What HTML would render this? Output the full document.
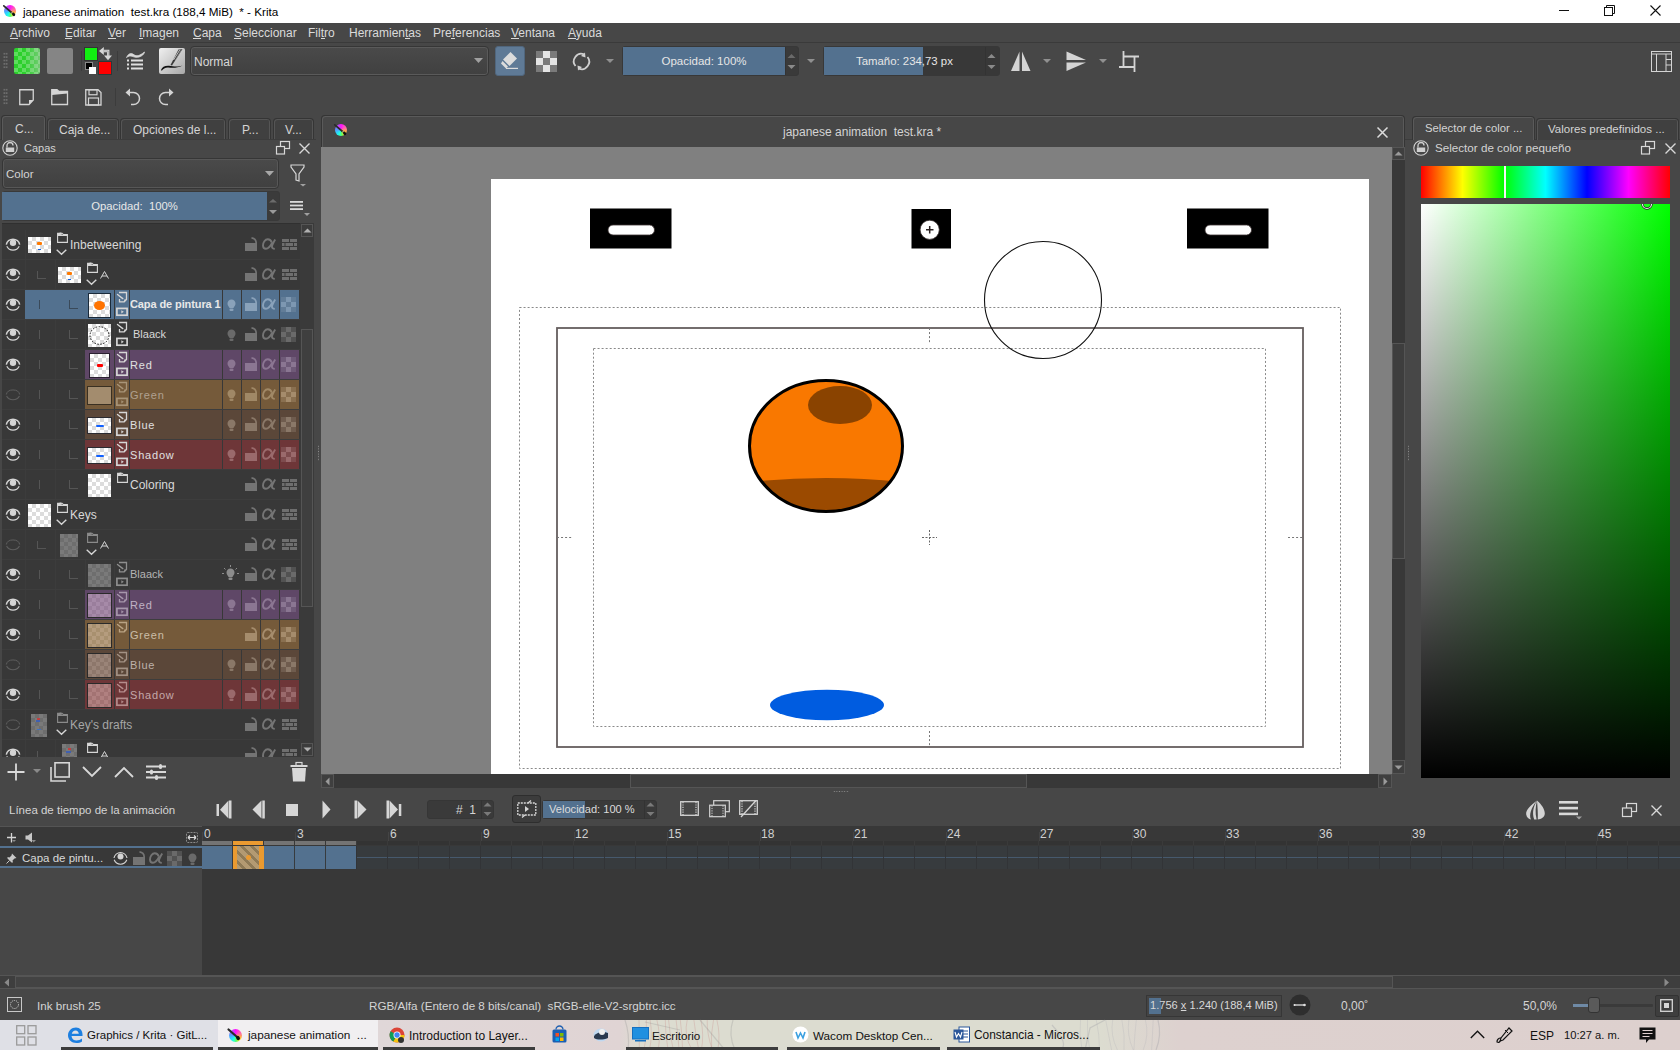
<!DOCTYPE html>
<html><head><meta charset="utf-8">
<style>
*{margin:0;padding:0;box-sizing:border-box}
html,body{width:1680px;height:1050px;overflow:hidden;background:#474747;font-family:"Liberation Sans",sans-serif;font-size:12px;color:#d4d4d4}
.a{position:absolute}
.t{position:absolute;white-space:nowrap;line-height:1}
svg{position:absolute;overflow:visible}
</style></head><body>
<!-- TITLE BAR -->
<div class="a" style="left:0;top:0;width:1680px;height:23px;background:#fff"></div>
<div class="t" style="left:23px;top:6px;color:#000;font-size:11.7px">japanese animation&nbsp; test.kra (188,4 MiB)&nbsp; * - Krita</div>

<!-- MENU -->
<div class="a" style="left:0;top:23px;width:1680px;height:20px;background:#474747;border-bottom:1px solid #3a3a3a"></div>


<!-- MENU ITEMS -->
<div class="t" style="left:10px;top:27px;color:#dadada">Archivo</div>
<div class="t" style="left:65px;top:27px;color:#dadada">Editar</div>
<div class="t" style="left:108px;top:27px;color:#dadada">Ver</div>
<div class="t" style="left:139px;top:27px;color:#dadada">Imagen</div>
<div class="t" style="left:193px;top:27px;color:#dadada">Capa</div>
<div class="t" style="left:234px;top:27px;color:#dadada">Seleccionar</div>
<div class="t" style="left:308px;top:27px;color:#dadada">Filtro</div>
<div class="t" style="left:349px;top:27px;color:#dadada">Herramientas</div>
<div class="t" style="left:433px;top:27px;color:#dadada">Preferencias</div>
<div class="t" style="left:511px;top:27px;color:#dadada">Ventana</div>
<div class="t" style="left:568px;top:27px;color:#dadada">Ayuda</div>
<!-- menu underlines -->
<div class="a" style="left:10px;top:38px;width:8px;height:1px;background:#dadada"></div>
<div class="a" style="left:65px;top:38px;width:7px;height:1px;background:#dadada"></div>
<div class="a" style="left:108px;top:38px;width:8px;height:1px;background:#dadada"></div>
<div class="a" style="left:139px;top:38px;width:4px;height:1px;background:#dadada"></div>
<div class="a" style="left:193px;top:38px;width:8px;height:1px;background:#dadada"></div>
<div class="a" style="left:234px;top:38px;width:7px;height:1px;background:#dadada"></div>
<div class="a" style="left:321px;top:38px;width:4px;height:1px;background:#dadada"></div>
<div class="a" style="left:405px;top:38px;width:5px;height:1px;background:#dadada"></div>
<div class="a" style="left:451px;top:38px;width:4px;height:1px;background:#dadada"></div>
<div class="a" style="left:511px;top:38px;width:8px;height:1px;background:#dadada"></div>
<div class="a" style="left:568px;top:38px;width:8px;height:1px;background:#dadada"></div>

<!-- TOOLBAR 1 -->
<div class="a" style="left:3px;top:52px;width:5px;height:17px;background-image:radial-gradient(circle,#777 0.8px,transparent 1px);background-size:2.5px 3.4px"></div>
<div class="a" style="left:14px;top:48px;width:26px;height:26px;border-radius:2px;background-color:#22ee22;background-image:linear-gradient(90deg,rgba(71,71,71,0) 0%,rgba(71,71,71,0.0) 40%,rgba(200,200,200,0.45) 100%),repeating-conic-gradient(#5fdc5f 0 25%,#2bd02b 0 50%);background-size:100% 100%,8px 8px"></div>
<div class="a" style="left:47px;top:48px;width:26px;height:26px;border-radius:2px;background:#858585"></div>
<div class="a" style="left:81px;top:51px;width:1px;height:20px;background:#3c3c3c"></div>
<div class="a" style="left:84px;top:47px;width:14px;height:14px;background:#11f011;border:1px solid #333"></div>
<svg style="left:99px;top:47px" width="13" height="14" viewBox="0 0 13 14"><path d="M0 4 L4.8 0 L4.8 8 Z" fill="#d6d6d6"/><path d="M4.5 4 L9.2 4 L9.2 9" fill="none" stroke="#d6d6d6" stroke-width="2.4"/><path d="M4.6 4 L9.2 4 L9.2 9" fill="none" stroke="#9a9a9a" stroke-width="0.7"/><path d="M5 8.6 L13 8.6 L9 13.2 Z" fill="#d6d6d6"/></svg>
<div class="a" style="left:85px;top:62px;width:8px;height:8px;background:#000;border:1px solid #888"></div>
<div class="a" style="left:89px;top:67px;width:7px;height:7px;background:#fff"></div>
<div class="a" style="left:98px;top:61px;width:14px;height:14px;background:#ff0000;border:1px solid #2b3a3a"></div>
<div class="a" style="left:117px;top:51px;width:1px;height:20px;background:#3c3c3c"></div>
<svg style="left:126px;top:51px" width="20" height="20" viewBox="0 0 20 20"><path d="M0.5 6.5 C2.5 2.5,5 1.5,8 3.8 C10.5 5.5,13.5 5,18.5 1 C18 4,14 6.5,10 6.3 C6.5 6,4.5 3.5,0.5 6.5 Z" fill="#d8d8d8" stroke="#d8d8d8" stroke-width="0.8"/><rect x="1" y="8.5" width="2" height="2" fill="#e0e0e0"/><rect x="5" y="8.5" width="12" height="2" fill="#e0e0e0"/><rect x="1" y="12.5" width="2" height="2" fill="#e0e0e0"/><rect x="5" y="12.5" width="12" height="2" fill="#e0e0e0"/><rect x="1" y="16.5" width="2" height="2" fill="#e0e0e0"/><rect x="5" y="16.5" width="12" height="2" fill="#e0e0e0"/></svg>
<div class="a" style="left:159px;top:48px;width:26px;height:26px;border-radius:2px;background:linear-gradient(135deg,#f0f0f0,#a8a8a8)"></div>
<svg style="left:159px;top:48px" width="26" height="26" viewBox="0 0 26 26"><path d="M2 22 C3 19,6 17.5,10 17.8 C14 18,18 19.5,23.5 17.5 C18 20.5,13 19.8,9 19.6 C6 19.6,4 21,2.8 22.8 Z" fill="#111"/><path d="M11.5 17 L19.5 1.5 L23.5 1 L13 17.5 Z" fill="#3a3a3a"/><path d="M14.5 12 L21 1.5" stroke="#e0e0e0" stroke-width="0.8"/><path d="M16.5 12 L22.5 1.5" stroke="#999" stroke-width="0.6"/></svg>
<!-- blend combo -->
<div class="a" style="left:190px;top:46px;width:299px;height:30px;border:1px solid #363636;border-radius:4px;box-shadow:inset 0 0 0 1px #5a5a5a;background:linear-gradient(#4a4a4a,#404040)"></div>
<div class="t" style="left:194px;top:56px;color:#d8d8d8">Normal</div>
<svg style="left:474px;top:58px" width="9" height="5"><path d="M0 0 L9 0 L4.5 5Z" fill="#a0a0a0"/></svg>
<!-- eraser -->
<div class="a" style="left:495px;top:46px;width:30px;height:30px;border-radius:3px;background:#5f7a96;border:1px solid #50667d"></div>
<svg style="left:500px;top:51px" width="20" height="20" viewBox="0 0 20 20"><path d="M10.5 1 L17 7.5 L9.5 15 L3 8.5 Z" fill="#dcdcdc"/><path d="M2 10 L7.5 15.5 L5.5 17.5 L0.5 12.5 Z" fill="#dcdcdc" transform="translate(0.5,0)"/><rect x="6" y="16.8" width="12" height="1.2" fill="#dcdcdc"/></svg>
<!-- alpha checker -->
<div class="a" style="left:536px;top:51px;width:21px;height:21px;background-image:repeating-conic-gradient(#e4e4e4 0 25%,#7a7a7a 0 50%);background-size:14px 14px"></div>
<svg style="left:572px;top:52px" width="19" height="19" viewBox="0 0 19 19"><path d="M3.5 14 A7.5 7.5 0 0 1 12 2.3" fill="none" stroke="#d0d0d0" stroke-width="1.8"/><path d="M15.5 5 A7.5 7.5 0 0 1 7 16.7" fill="none" stroke="#d0d0d0" stroke-width="1.8"/><path d="M13 0.5 L13.5 5.5 L9 4 Z" fill="#d0d0d0"/><path d="M6 18.5 L5.5 13.5 L10 15 Z" fill="#d0d0d0"/></svg>
<svg style="left:606px;top:59px" width="8" height="4"><path d="M0 0 L8 0 L4 4Z" fill="#909090"/></svg>
<!-- opacity slider -->
<div class="a" style="left:622px;top:46px;width:177px;height:30px;border:1px solid #383838;border-radius:3px;background:#3a3a3a"></div>
<div class="a" style="left:623px;top:47px;width:162px;height:28px;background:#53718f"></div>
<div class="t" style="left:623px;top:56px;width:162px;text-align:center;color:#e6e6e6;font-size:11.5px">Opacidad: 100%</div>
<div class="a" style="left:785px;top:47px;width:1px;height:28px;background:#333"></div>
<svg style="left:787px;top:53px" width="9" height="18"><path d="M0.5 5 L4.5 1 L8.5 5Z" fill="#6a6a6a"/><path d="M0.5 12 L4.5 16 L8.5 12Z" fill="#8a8a8a"/></svg>
<svg style="left:807px;top:59px" width="8" height="4"><path d="M0 0 L8 0 L4 4Z" fill="#909090"/></svg>
<!-- size slider -->
<div class="a" style="left:823px;top:46px;width:177px;height:30px;border:1px solid #383838;border-radius:3px;background:#383838"></div>
<div class="a" style="left:824px;top:47px;width:99px;height:28px;background:#53718f"></div>
<div class="t" style="left:856px;top:56px;color:#e6e6e6;font-size:11.4px">Tamaño: 234,73 px</div>
<div class="a" style="left:985px;top:47px;width:1px;height:28px;background:#333"></div>
<svg style="left:987px;top:53px" width="9" height="18"><path d="M0.5 5 L4.5 1 L8.5 5Z" fill="#8a8a8a"/><path d="M0.5 12 L4.5 16 L8.5 12Z" fill="#8a8a8a"/></svg>
<!-- mirror -->
<svg style="left:1010px;top:51px" width="22" height="21" viewBox="0 0 22 21"><path d="M9.5 0.5 L9.5 20 L1 20 Z" fill="#d4d4d4"/><path d="M12 0.5 L12 20 L20.5 20 Z" fill="#d4d4d4"/></svg>
<svg style="left:1043px;top:59px" width="8" height="4"><path d="M0 0 L8 0 L4 4Z" fill="#909090"/></svg>
<svg style="left:1066px;top:51px" width="22" height="21" viewBox="0 0 22 21"><path d="M0.5 0.5 L20 9 L0.5 9 Z" fill="#d4d4d4"/><path d="M0.5 11.5 L20 11.5 L0.5 20 Z" fill="#d4d4d4"/></svg>
<svg style="left:1099px;top:59px" width="8" height="4"><path d="M0 0 L8 0 L4 4Z" fill="#909090"/></svg>
<svg style="left:1119px;top:51px" width="21" height="21" viewBox="0 0 21 21"><path d="M4.5 0 L4.5 16 M0 16 L15 16 M5 5.5 L20 5.5 M15.5 5 L15.5 21" fill="none" stroke="#d4d4d4" stroke-width="1.8"/></svg>
<!-- workspace -->
<svg style="left:1651px;top:51px" width="21" height="21" viewBox="0 0 21 21"><rect x="0.5" y="0.5" width="20" height="20" fill="none" stroke="#d4d4d4"/><path d="M0.5 3 L20.5 3 M5.5 3 L5.5 21 M15 3 L15 21 M15 8.5 L20.5 8.5 M15 14 L20.5 14" fill="none" stroke="#d4d4d4"/></svg>

<!-- TOOLBAR 2 -->
<div class="a" style="left:3px;top:88px;width:5px;height:17px;background-image:radial-gradient(circle,#777 0.8px,transparent 1px);background-size:2.5px 3.4px"></div>
<svg style="left:19px;top:89px" width="16" height="17" viewBox="0 0 16 17"><path d="M0.75 0.75 L14.25 0.75 L14.25 11 L10 15.5 L0.75 15.5 Z" fill="none" stroke="#d4d4d4" stroke-width="1.3"/><path d="M10 15.5 L10 11 L14.5 11 Z" fill="#d4d4d4"/></svg>
<svg style="left:51px;top:89px" width="18" height="17" viewBox="0 0 18 17"><path d="M0.75 0.75 L6 0.75 L8 2.5 L16.5 2.5 L16.5 15.5 L0.75 15.5 Z" fill="none" stroke="#d4d4d4" stroke-width="1.3"/><path d="M0.75 0.75 L6 0.75 L8 2.5 L16.5 2.5 L16.5 4.5 L0.75 6 Z" fill="#d4d4d4"/></svg>
<svg style="left:85px;top:89px" width="17" height="17" viewBox="0 0 17 17"><path d="M0.75 0.75 L13 0.75 L16 3.5 L16 16 L0.75 16 Z" fill="none" stroke="#d4d4d4" stroke-width="1.3"/><rect x="4" y="0.75" width="8" height="5" fill="none" stroke="#d4d4d4" stroke-width="1.2"/><rect x="3.5" y="9" width="10" height="7" fill="none" stroke="#d4d4d4" stroke-width="1.2"/></svg>
<div class="a" style="left:115px;top:88px;width:1px;height:18px;background:#3c3c3c"></div>
<svg style="left:125px;top:88px" width="17" height="18" viewBox="0 0 17 18"><path d="M3 4.5 L8.5 4.5 A6 6 0 0 1 8.5 16.5 L6 16.5" fill="none" stroke="#d4d4d4" stroke-width="1.5"/><path d="M0.5 4.5 L5 0.5 L5 8.5 Z" fill="#d4d4d4"/></svg>
<svg style="left:157px;top:88px" width="17" height="18" viewBox="0 0 17 18"><path d="M14 4.5 L8.5 4.5 A6 6 0 0 0 8.5 16.5 L11 16.5" fill="none" stroke="#d4d4d4" stroke-width="1.5"/><path d="M16.5 4.5 L12 0.5 L12 8.5 Z" fill="#d4d4d4"/></svg>

<!--CANVAS_START-->
<div class="a" style="left:3.5999999999999996px;top:4.6px;width:12.8px;height:12.8px;border-radius:50%;background:conic-gradient(#ff10ff 0deg,#ff70a0 70deg,#ffb040 110deg,#f8f020 140deg,#60ff60 170deg,#20ffe0 205deg,#30d0ff 240deg,#6090ff 280deg,#b050ff 320deg,#ff10ff 360deg)"></div>
<svg style="left:3px;top:5px" width="14" height="14" viewBox="0 0 14 14"><path d="M0.8 0.8 L8.5 7.5" stroke="#2a2a2a" stroke-width="1.7" stroke-linecap="round"/><path d="M8.5 7.5 L9.5 8.3" stroke="#bbb" stroke-width="1.2"/><ellipse cx="10.6" cy="9.4" rx="1.4" ry="1.9" transform="rotate(-40 10.6 9.4)" fill="#111"/></svg>
<div class="a" style="left:321px;top:115px;width:1084px;height:33px;background:#474747;border:1px solid #353535;border-bottom:none;border-radius:4px 4px 0 0;box-shadow:inset 1px 1px 0 #5a5a5a,inset -1px 0 0 #5a5a5a"></div>
<div class="a" style="left:334.6px;top:123.6px;width:12.8px;height:12.8px;border-radius:50%;background:conic-gradient(#ff10ff 0deg,#ff70a0 70deg,#ffb040 110deg,#f8f020 140deg,#60ff60 170deg,#20ffe0 205deg,#30d0ff 240deg,#6090ff 280deg,#b050ff 320deg,#ff10ff 360deg)"></div>
<svg style="left:334px;top:124px" width="14" height="14" viewBox="0 0 14 14"><path d="M0.8 0.8 L8.5 7.5" stroke="#2a2a2a" stroke-width="1.7" stroke-linecap="round"/><path d="M8.5 7.5 L9.5 8.3" stroke="#bbb" stroke-width="1.2"/><ellipse cx="10.6" cy="9.4" rx="1.4" ry="1.9" transform="rotate(-40 10.6 9.4)" fill="#111"/></svg>
<div class="t" style="left:783px;top:126px;color:#d4d4d4">japanese animation&nbsp; test.kra *</div>
<svg style="left:1377px;top:127px" width="11" height="11" viewBox="0 0 11 11"><path d="M0.5 0.5 L10.5 10.5 M10.5 0.5 L0.5 10.5" stroke="#dcdcdc" stroke-width="1.5"/></svg>
<div class="a" style="left:321px;top:147px;width:1071px;height:627px;background:#808080"></div>
<div class="a" style="left:491px;top:179px;width:878px;height:595px;background:#fff"></div>
<div class="a" style="left:1392px;top:147px;width:13px;height:627px;background:#383838"></div>
<div class="a" style="left:1392px;top:147px;width:13px;height:13px;border:1px solid #555;background:#3f3f3f"></div>
<svg style="left:1394px;top:151px" width="9" height="5" viewBox="0 0 9 5"><path d="M0.5 4.5 L4.5 0.5 L8.5 4.5Z" fill="#9a9a9a"/></svg>
<div class="a" style="left:1392px;top:343px;width:13px;height:216px;border:1px solid #555;background:#3e3e3e"></div>
<div class="a" style="left:1392px;top:760px;width:13px;height:14px;border:1px solid #555;background:#3f3f3f"></div>
<svg style="left:1394px;top:765px" width="9" height="5" viewBox="0 0 9 5"><path d="M0.5 0.5 L8.5 0.5 L4.5 4.5Z" fill="#9a9a9a"/></svg>
<div class="a" style="left:321px;top:774px;width:1071px;height:14px;background:#383838"></div>
<div class="a" style="left:321px;top:774px;width:13px;height:14px;border:1px solid #555;background:#3f3f3f"></div>
<svg style="left:325px;top:777px" width="5" height="9" viewBox="0 0 5 9"><path d="M4.5 0.5 L4.5 8.5 L0.5 4.5Z" fill="#9a9a9a"/></svg>
<div class="a" style="left:630px;top:774px;width:397px;height:14px;border:1px solid #555;background:#3e3e3e"></div>
<div class="a" style="left:1378px;top:774px;width:14px;height:14px;border:1px solid #555;background:#3f3f3f"></div>
<svg style="left:1383px;top:777px" width="5" height="9" viewBox="0 0 5 9"><path d="M0.5 0.5 L0.5 8.5 L4.5 4.5Z" fill="#9a9a9a"/></svg>
<div class="a" style="left:833px;top:790px;width:16px;height:3px;background-image:radial-gradient(circle,#8a8a8a 0.6px,transparent 0.9px);background-size:2.6px 3px"></div>
<svg style="left:0;top:0" width="1680" height="1050" viewBox="0 0 1680 1050"><defs><clipPath id="page"><rect x="491" y="179" width="878" height="595"/></clipPath></defs><g clip-path="url(#page)"><rect x="590" y="208.5" width="81.5" height="40" fill="#000"/><rect x="608" y="225" width="46.5" height="10" rx="5" fill="#fff" stroke="#3a3030" stroke-width="0.8"/><rect x="911.5" y="209" width="39.5" height="39.5" fill="#000"/><circle cx="929.7" cy="229.8" r="9.6" fill="#fff" stroke="#3a3030" stroke-width="0.8"/><path d="M926 229.8 L933.5 229.8 M929.7 226 L929.7 233.6" stroke="#2a2020" stroke-width="1.5"/><rect x="1187" y="208.5" width="81.5" height="40" fill="#000"/><rect x="1205" y="225" width="46.5" height="10" rx="5" fill="#fff" stroke="#3a3030" stroke-width="0.8"/><rect x="519.5" y="307.5" width="821" height="461" fill="none" stroke="#8a8a8a" stroke-width="1" stroke-dasharray="2 2.05"/><rect x="557" y="328" width="746" height="419" fill="none" stroke="#655e5e" stroke-width="1.8"/><rect x="593.5" y="348.5" width="672" height="378" fill="none" stroke="#8a8a8a" stroke-width="1" stroke-dasharray="2 2.05"/><path d="M929.5 328 L929.5 343 M929.5 731 L929.5 747 M557 537.5 L572 537.5 M1288 537.5 L1303 537.5" stroke="#777" stroke-width="1" stroke-dasharray="2 2.05"/><path d="M922 537.5 L937 537.5 M929.5 530 L929.5 545" stroke="#666" stroke-width="1" stroke-dasharray="2 1.5"/><circle cx="1043" cy="300" r="58.5" fill="none" stroke="#111" stroke-width="1.1"/><defs><clipPath id="ball"><ellipse cx="826" cy="446" rx="76" ry="65"/></clipPath></defs><ellipse cx="826" cy="446" rx="76" ry="65" fill="#f97800"/><g clip-path="url(#ball)"><ellipse cx="840" cy="405" rx="32" ry="19" fill="#8a4300"/><path d="M740 483 Q826 473 912 483 L912 520 L740 520 Z" fill="#9b4a00"/></g><ellipse cx="826" cy="446" rx="76.5" ry="65.5" fill="none" stroke="#000" stroke-width="3"/><ellipse cx="827" cy="705" rx="57" ry="15.3" fill="#005ce0"/></g></svg>
<!--CANVAS_END-->
<!-- LEFT DOCK -->
<!--LAYERS_START-->
<div class="a" style="left:0px;top:139px;width:316px;height:1px;background:#3c3c3c"></div>
<div class="a" style="left:1px;top:115px;width:45px;height:25px;background:#474747;border:1px solid #353535;border-bottom:none;border-radius:4px 4px 0 0;box-shadow:inset 1px 1px 0 #5a5a5a,inset -1px 0 0 #5a5a5a"></div>
<div class="t" style="left:15px;top:123px;color:#d4d4d4">C...</div>
<div class="a" style="left:47px;top:118px;width:72px;height:21px;background:#404040;border:1px solid #353535;border-bottom:none;border-radius:4px 4px 0 0;box-shadow:inset 1px 1px 0 #555,inset -1px 0 0 #555"></div>
<div class="t" style="left:59px;top:124px;color:#d4d4d4">Caja de...</div>
<div class="a" style="left:120px;top:118px;width:106px;height:21px;background:#404040;border:1px solid #353535;border-bottom:none;border-radius:4px 4px 0 0;box-shadow:inset 1px 1px 0 #555,inset -1px 0 0 #555"></div>
<div class="t" style="left:133px;top:124px;color:#d4d4d4">Opciones de l...</div>
<div class="a" style="left:228px;top:118px;width:43px;height:21px;background:#404040;border:1px solid #353535;border-bottom:none;border-radius:4px 4px 0 0;box-shadow:inset 1px 1px 0 #555,inset -1px 0 0 #555"></div>
<div class="t" style="left:242px;top:124px;color:#d4d4d4">P...</div>
<div class="a" style="left:273px;top:118px;width:41px;height:21px;background:#404040;border:1px solid #353535;border-bottom:none;border-radius:4px 4px 0 0;box-shadow:inset 1px 1px 0 #555,inset -1px 0 0 #555"></div>
<div class="t" style="left:285px;top:124px;color:#d4d4d4">V...</div>
<svg style="left:2px;top:140px" width="16" height="16" viewBox="0 0 16 16"><circle cx="8" cy="8" r="7.2" fill="none" stroke="#d0d0d0" stroke-width="1.1"/><path d="M5 7.5 L5 5.5 A3 3 0 0 1 11 5.5" fill="none" stroke="#d0d0d0" stroke-width="1.3"/><rect x="3.8" y="7.5" width="8.4" height="4.5" fill="#d0d0d0"/></svg>
<div class="t" style="left:24px;top:143px;color:#d4d4d4;font-size:11px">Capas</div>
<svg style="left:276px;top:141px" width="15" height="14" viewBox="0 0 15 14"><rect x="4.5" y="0.5" width="9" height="7" fill="none" stroke="#d8d8d8" stroke-width="1.2"/><rect x="0.5" y="5.5" width="8" height="7.5" fill="#474747" stroke="#d8d8d8" stroke-width="1.2"/></svg>
<svg style="left:299px;top:143px" width="11" height="11" viewBox="0 0 11 11"><path d="M0.5 0.5 L10.5 10.5 M10.5 0.5 L0.5 10.5" stroke="#d8d8d8" stroke-width="1.4"/></svg>
<div class="a" style="left:2px;top:158px;width:277px;height:31px;border:1px solid #363636;border-radius:4px;box-shadow:inset 0 0 0 1px #575757;background:linear-gradient(#4a4a4a,#404040)"></div>
<div class="t" style="left:6px;top:169px;color:#d4d4d4;font-size:11.5px">Color</div>
<svg style="left:265px;top:171px" width="9" height="5" viewBox="0 0 9 5"><path d="M0 0 L9 0 L4.5 5Z" fill="#a8a8a8"/></svg>
<svg style="left:290px;top:164px" width="16" height="23" viewBox="0 0 16 23"><path d="M1 1 L14 1 L14 3 L9 10 L9 17 L6 16 L6 10 L1 3 Z" fill="none" stroke="#d8d8d8" stroke-width="1.2"/><path d="M10 20 L16 20 L13 22.5Z" fill="#a0a0a0"/></svg>
<div class="a" style="left:2px;top:191px;width:278px;height:30px;border:1px solid #393939;border-radius:3px;background:#3b3b3b"></div>
<div class="a" style="left:2px;top:192px;width:265px;height:28px;background:#53718f"></div>
<div class="t" style="left:2px;top:201px;width:265px;text-align:center;color:#e8e8e8;font-size:11.3px">Opacidad:&nbsp; 100%</div>
<svg style="left:268px;top:198px" width="10" height="17" viewBox="0 0 10 17"><path d="M1 4.5 L5 1 L9 4.5Z" fill="#6c6c6c"/><path d="M1 12 L5 16 L9 12Z" fill="#9a9a9a"/></svg>
<svg style="left:290px;top:201px" width="14" height="9" viewBox="0 0 14 9"><rect x="0" y="0" width="13" height="1.8" fill="#dadada"/><rect x="0" y="3.6" width="13" height="1.8" fill="#dadada"/><rect x="0" y="7.2" width="13" height="1.8" fill="#dadada"/></svg>
<svg style="left:304px;top:213px" width="6" height="4" viewBox="0 0 6 4"><path d="M0 0 L6 0 L3 3Z" fill="#a0a0a0"/></svg>
<div class="a" style="left:2px;top:223px;width:298px;height:534px;background:#383838;border-top:1px solid #303030"></div>
<div class="a" style="left:300px;top:223px;width:14px;height:534px;background:#3a3a3a"></div>
<div class="a" style="left:301px;top:224px;width:12px;height:13px;border:1px solid #555;background:#3c3c3c"></div>
<svg style="left:303px;top:228px" width="9" height="5" viewBox="0 0 9 5"><path d="M0.5 4.5 L4.5 0.5 L8.5 4.5Z" fill="#b0b0b0"/></svg>
<div class="a" style="left:301px;top:329px;width:12px;height:278px;border:1px solid #555;background:#3f3f3f"></div>
<div class="a" style="left:301px;top:743px;width:12px;height:13px;border:1px solid #555;background:#3c3c3c"></div>
<svg style="left:303px;top:747px" width="9" height="5" viewBox="0 0 9 5"><path d="M0.5 0.5 L8.5 0.5 L4.5 4.5Z" fill="#b0b0b0"/></svg>
<div class="a" style="left:2px;top:224px;width:298px;height:533px;overflow:hidden">
<div class="a" style="left:0px;top:35px;width:298px;height:1px;background:#3d3d3d"></div>
<div class="a" style="left:23px;top:6px;width:1px;height:29px;background:#3c3c3c"></div>
<svg style="left:0px;top:10px" width="22" height="22" viewBox="0 0 22 22"><path d="M4.3 10.6 A6.8 6.6 0 0 1 17.7 10.6" fill="none" stroke="#d4d4d4" stroke-width="1.5"/><circle cx="11" cy="8.8" r="3.2" fill="#d4d4d4"/><path d="M4.8 12.3 A6.9 6.9 0 0 0 17.2 12.3" fill="none" stroke="#d4d4d4" stroke-width="1.15"/></svg>
<div class="a" style="left:26px;top:13px;width:23px;height:16px;background-color:#fff;background-image:repeating-conic-gradient(#dcdcdc 0 25%,#fff 0 50%);background-size:8px 8px"></div>
<div class="a" style="left:35px;top:18px;width:5px;height:3px;background:#ff7a00;border-radius:1px"></div>
<div class="a" style="left:36px;top:25px;width:3px;height:1px;background:#1060e0"></div>
<svg style="left:55px;top:8px" width="11" height="11" viewBox="0 0 11 11"><path d="M0.6 1.2 L5 1.2 L6.5 2.6 L10.4 2.6 L10.4 10.4 L0.6 10.4 Z" fill="none" stroke="#d6d6d6" stroke-width="1.1"/><path d="M0.6 1.2 L4 0.6 L5.5 2.6 L0.6 3.6Z" fill="#d6d6d6"/><path d="M0.6 3.5 L10.4 3.5" stroke="#d6d6d6" stroke-width="1"/></svg>
<svg style="left:54px;top:25px" width="11" height="6" viewBox="0 0 11 6"><path d="M0.7 0.7 L5.5 5.3 L10.3 0.7" fill="none" stroke="#d6d6d6" stroke-width="1.4"/></svg>
<div class="t" style="left:68px;top:15px;color:#d8d8d8">Inbetweening</div>
<svg style="left:243px;top:13px" width="13" height="14" viewBox="0 0 13 14"><rect x="0" y="6" width="12" height="8" fill="#747474"/><path d="M6.5 0.9 Q11 1.5 11.2 6" fill="none" stroke="#747474" stroke-width="1.7"/></svg>
<svg style="left:260px;top:14px" width="15" height="13" viewBox="0 0 15 13"><path d="M9.8 4.5 C9 2 7.5 1.2 5.8 1.2 C3 1.2 1 4.5 1 7.5 C1 9.5 2.2 10.8 4 10.8 C6.8 10.8 8.8 7.5 10.2 4.8 M13.2 1.5 C11.8 3.8 10.3 6.5 10 8.3 C9.8 9.8 10.8 10.8 12.8 10.9" fill="none" stroke="#747474" stroke-width="1.9"/></svg>
<svg style="left:280px;top:15px" width="15" height="11" viewBox="0 0 15 11"><rect x="0" y="0" width="7" height="3" fill="#6e6e6e"/><rect x="8" y="0" width="7" height="3" fill="#6e6e6e"/><rect x="0" y="4" width="2.5" height="3" fill="#6e6e6e"/><rect x="3.5" y="4" width="7.5" height="3" fill="#6e6e6e"/><rect x="12" y="4" width="3" height="3" fill="#6e6e6e"/><rect x="0" y="8" width="7" height="3" fill="#6e6e6e"/><rect x="8" y="8" width="7" height="3" fill="#6e6e6e"/></svg>
<div class="a" style="left:0px;top:65px;width:298px;height:1px;background:#3d3d3d"></div>
<div class="a" style="left:23px;top:36px;width:1px;height:29px;background:#3c3c3c"></div>
<svg style="left:0px;top:40px" width="22" height="22" viewBox="0 0 22 22"><path d="M4.3 10.6 A6.8 6.6 0 0 1 17.7 10.6" fill="none" stroke="#d4d4d4" stroke-width="1.5"/><circle cx="11" cy="8.8" r="3.2" fill="#d4d4d4"/><path d="M4.8 12.3 A6.9 6.9 0 0 0 17.2 12.3" fill="none" stroke="#d4d4d4" stroke-width="1.15"/></svg>
<div class="a" style="left:53px;top:36px;width:1px;height:29px;background:#3c3c3c"></div>
<div class="a" style="left:35px;top:47px;width:1px;height:8px;background:#555"></div>
<div class="a" style="left:35px;top:54px;width:9px;height:1px;background:#555"></div>
<div class="a" style="left:56px;top:43px;width:23px;height:16px;background-color:#fff;background-image:repeating-conic-gradient(#dcdcdc 0 25%,#fff 0 50%);background-size:8px 8px"></div>
<div class="a" style="left:65px;top:48px;width:5px;height:3px;background:#ff7a00;border-radius:1px"></div>
<div class="a" style="left:66px;top:55px;width:3px;height:1px;background:#1060e0"></div>
<svg style="left:85px;top:38px" width="11" height="11" viewBox="0 0 11 11"><path d="M0.6 1.2 L5 1.2 L6.5 2.6 L10.4 2.6 L10.4 10.4 L0.6 10.4 Z" fill="none" stroke="#d6d6d6" stroke-width="1.1"/><path d="M0.6 1.2 L4 0.6 L5.5 2.6 L0.6 3.6Z" fill="#d6d6d6"/><path d="M0.6 3.5 L10.4 3.5" stroke="#d6d6d6" stroke-width="1"/></svg>
<svg style="left:84px;top:55px" width="11" height="6" viewBox="0 0 11 6"><path d="M0.7 0.7 L5.5 5.3 L10.3 0.7" fill="none" stroke="#d6d6d6" stroke-width="1.4"/></svg>
<svg style="left:98px;top:47px" width="9" height="8" viewBox="0 0 9 8"><path d="M0.5 7.5 L4.5 0.5 L8.5 7.5 M2 5 L7 5" fill="none" stroke="#d6d6d6" stroke-width="1"/></svg>
<svg style="left:243px;top:43px" width="13" height="14" viewBox="0 0 13 14"><rect x="0" y="6" width="12" height="8" fill="#747474"/><path d="M6.5 0.9 Q11 1.5 11.2 6" fill="none" stroke="#747474" stroke-width="1.7"/></svg>
<svg style="left:260px;top:44px" width="15" height="13" viewBox="0 0 15 13"><path d="M9.8 4.5 C9 2 7.5 1.2 5.8 1.2 C3 1.2 1 4.5 1 7.5 C1 9.5 2.2 10.8 4 10.8 C6.8 10.8 8.8 7.5 10.2 4.8 M13.2 1.5 C11.8 3.8 10.3 6.5 10 8.3 C9.8 9.8 10.8 10.8 12.8 10.9" fill="none" stroke="#747474" stroke-width="1.9"/></svg>
<svg style="left:280px;top:45px" width="15" height="11" viewBox="0 0 15 11"><rect x="0" y="0" width="7" height="3" fill="#6e6e6e"/><rect x="8" y="0" width="7" height="3" fill="#6e6e6e"/><rect x="0" y="4" width="2.5" height="3" fill="#6e6e6e"/><rect x="3.5" y="4" width="7.5" height="3" fill="#6e6e6e"/><rect x="12" y="4" width="3" height="3" fill="#6e6e6e"/><rect x="0" y="8" width="7" height="3" fill="#6e6e6e"/><rect x="8" y="8" width="7" height="3" fill="#6e6e6e"/></svg>
<div class="a" style="left:0px;top:95px;width:298px;height:1px;background:#3d3d3d"></div>
<div class="a" style="left:23px;top:66px;width:1px;height:29px;background:#3c3c3c"></div>
<svg style="left:0px;top:70px" width="22" height="22" viewBox="0 0 22 22"><path d="M4.3 10.6 A6.8 6.6 0 0 1 17.7 10.6" fill="none" stroke="#d4d4d4" stroke-width="1.5"/><circle cx="11" cy="8.8" r="3.2" fill="#d4d4d4"/><path d="M4.8 12.3 A6.9 6.9 0 0 0 17.2 12.3" fill="none" stroke="#d4d4d4" stroke-width="1.15"/></svg>
<div class="a" style="left:53px;top:66px;width:1px;height:29px;background:#3c3c3c"></div>
<div class="a" style="left:23px;top:66px;width:60px;height:29px;background:#53718f"></div>
<div class="a" style="left:37px;top:76px;width:1px;height:9px;background:#3a4a5a"></div>
<div class="a" style="left:67px;top:76px;width:1px;height:9px;background:#3a4a5a"></div>
<div class="a" style="left:67px;top:84px;width:9px;height:1px;background:#3a4a5a"></div>
<div class="a" style="left:83px;top:66px;width:29px;height:29px;background:#53718f"></div>
<div class="a" style="left:113px;top:66px;width:14px;height:29px;background:#53718f"></div>
<div class="a" style="left:128px;top:66px;width:92px;height:29px;background:#53718f"></div>
<div class="a" style="left:221px;top:66px;width:18px;height:29px;background:#53718f"></div>
<div class="a" style="left:240px;top:66px;width:18px;height:29px;background:#53718f"></div>
<div class="a" style="left:259px;top:66px;width:18px;height:29px;background:#53718f"></div>
<div class="a" style="left:278px;top:66px;width:19px;height:29px;background:#53718f"></div>
<div class="a" style="left:86px;top:69px;width:23px;height:25px;background:#1a2a3a"></div>
<div class="a" style="left:87px;top:70px;width:21px;height:23px;background-color:#fff;background-image:repeating-conic-gradient(#dcdcdc 0 25%,#fff 0 50%);background-size:8px 8px"></div>
<div class="a" style="left:92px;top:77px;width:11px;height:9px;background:#ff7300;border-radius:50%"></div>
<svg style="left:114px;top:67px" width="11" height="11" viewBox="0 0 11 11"><path d="M3 1.5 L10.5 1.5 L10.5 8.5 L8.2 10.8 L3.5 10.8 L3.5 8" fill="none" stroke="#d6d6d6" stroke-width="1.3"/><path d="M10.5 8.5 L8.2 8.5 L8.2 10.8 Z" fill="#d6d6d6"/><path d="M1.5 3.5 L6.8 7.6" stroke="#d6d6d6" stroke-width="1.4" stroke-linecap="round"/></svg>
<svg style="left:114px;top:83px" width="12" height="9" viewBox="0 0 12 9"><rect x="0.9" y="1.4" width="10.2" height="6.8" fill="none" stroke="#d6d6d6" stroke-width="1.7"/><path d="M5.3 3.2 L7.8 4.8 L5.3 6.4Z" fill="#d6d6d6"/></svg>
<div class="t" style="left:128px;top:75px;color:#e8e8e8;font-weight:bold;font-size:11px;letter-spacing:-0.1px">Capa de pintura 1</div>
<svg style="left:225px;top:75px" width="9" height="12" viewBox="0 0 9 12"><path d="M4.5 0.5 A4 4 0 0 1 8.5 4.8 C8.5 6.5 7 7.5 6.5 9 L2.5 9 C2 7.5 0.5 6.5 0.5 4.8 A4 4 0 0 1 4.5 0.5Z" fill="#8aa2ba"/><rect x="2.5" y="9.6" width="4" height="2.4" rx="1" fill="#8aa2ba"/></svg>
<svg style="left:243px;top:73px" width="13" height="14" viewBox="0 0 13 14"><rect x="0" y="6" width="12" height="8" fill="#8aa2ba"/><path d="M6.5 0.9 Q11 1.5 11.2 6" fill="none" stroke="#8aa2ba" stroke-width="1.7"/></svg>
<svg style="left:260px;top:74px" width="15" height="13" viewBox="0 0 15 13"><path d="M9.8 4.5 C9 2 7.5 1.2 5.8 1.2 C3 1.2 1 4.5 1 7.5 C1 9.5 2.2 10.8 4 10.8 C6.8 10.8 8.8 7.5 10.2 4.8 M13.2 1.5 C11.8 3.8 10.3 6.5 10 8.3 C9.8 9.8 10.8 10.8 12.8 10.9" fill="none" stroke="#8aa2ba" stroke-width="1.9"/></svg>
<svg style="left:279px;top:73px" width="15" height="15" viewBox="0 0 15 15"><rect x="0" y="0" width="5" height="5" fill="#627d98"/><rect x="5" y="0" width="5" height="5" fill="#7d97b1"/><rect x="10" y="0" width="5" height="5" fill="#627d98"/><rect x="0" y="5" width="5" height="5" fill="#7d97b1"/><rect x="5" y="5" width="5" height="5" fill="#627d98"/><rect x="10" y="5" width="5" height="5" fill="#7d97b1"/><rect x="0" y="10" width="5" height="5" fill="#627d98"/><rect x="5" y="10" width="5" height="5" fill="#7d97b1"/><rect x="10" y="10" width="5" height="5" fill="#627d98"/></svg>
<div class="a" style="left:0px;top:125px;width:298px;height:1px;background:#3d3d3d"></div>
<div class="a" style="left:23px;top:96px;width:1px;height:29px;background:#3c3c3c"></div>
<svg style="left:0px;top:100px" width="22" height="22" viewBox="0 0 22 22"><path d="M4.3 10.6 A6.8 6.6 0 0 1 17.7 10.6" fill="none" stroke="#d4d4d4" stroke-width="1.5"/><circle cx="11" cy="8.8" r="3.2" fill="#d4d4d4"/><path d="M4.8 12.3 A6.9 6.9 0 0 0 17.2 12.3" fill="none" stroke="#d4d4d4" stroke-width="1.15"/></svg>
<div class="a" style="left:53px;top:96px;width:1px;height:29px;background:#3c3c3c"></div>
<div class="a" style="left:37px;top:106px;width:1px;height:9px;background:#555"></div>
<div class="a" style="left:67px;top:106px;width:1px;height:9px;background:#555"></div>
<div class="a" style="left:67px;top:114px;width:9px;height:1px;background:#555"></div>
<div class="a" style="left:83px;top:96px;width:1px;height:29px;background:#3c3c3c"></div>
<div class="a" style="left:112px;top:96px;width:1px;height:29px;background:#3c3c3c"></div>
<div class="a" style="left:127px;top:96px;width:1px;height:29px;background:#3c3c3c"></div>
<div class="a" style="left:86px;top:100px;width:23px;height:23px;background-color:#fff;background-image:repeating-conic-gradient(#dcdcdc 0 25%,#fff 0 50%);background-size:8px 8px"></div>
<svg style="left:87px;top:102px" width="21" height="19" viewBox="0 0 21 19"><ellipse cx="10.5" cy="9.5" rx="9.5" ry="8.8" fill="none" stroke="#111" stroke-width="1" stroke-dasharray="1.5 1.5"/></svg>
<svg style="left:114px;top:97px" width="11" height="11" viewBox="0 0 11 11"><path d="M3 1.5 L10.5 1.5 L10.5 8.5 L8.2 10.8 L3.5 10.8 L3.5 8" fill="none" stroke="#d6d6d6" stroke-width="1.3"/><path d="M10.5 8.5 L8.2 8.5 L8.2 10.8 Z" fill="#d6d6d6"/><path d="M1.5 3.5 L6.8 7.6" stroke="#d6d6d6" stroke-width="1.4" stroke-linecap="round"/></svg>
<svg style="left:114px;top:113px" width="12" height="9" viewBox="0 0 12 9"><rect x="0.9" y="1.4" width="10.2" height="6.8" fill="none" stroke="#d6d6d6" stroke-width="1.7"/><path d="M5.3 3.2 L7.8 4.8 L5.3 6.4Z" fill="#d6d6d6"/></svg>
<div class="t" style="left:131px;top:105px;color:#d8d8d8;font-size:11px">Blaack</div>
<svg style="left:225px;top:105px" width="9" height="12" viewBox="0 0 9 12"><path d="M4.5 0.5 A4 4 0 0 1 8.5 4.8 C8.5 6.5 7 7.5 6.5 9 L2.5 9 C2 7.5 0.5 6.5 0.5 4.8 A4 4 0 0 1 4.5 0.5Z" fill="#6a6a6a"/><rect x="2.5" y="9.6" width="4" height="2.4" rx="1" fill="#6a6a6a"/></svg>
<svg style="left:243px;top:103px" width="13" height="14" viewBox="0 0 13 14"><rect x="0" y="6" width="12" height="8" fill="#747474"/><path d="M6.5 0.9 Q11 1.5 11.2 6" fill="none" stroke="#747474" stroke-width="1.7"/></svg>
<svg style="left:260px;top:104px" width="15" height="13" viewBox="0 0 15 13"><path d="M9.8 4.5 C9 2 7.5 1.2 5.8 1.2 C3 1.2 1 4.5 1 7.5 C1 9.5 2.2 10.8 4 10.8 C6.8 10.8 8.8 7.5 10.2 4.8 M13.2 1.5 C11.8 3.8 10.3 6.5 10 8.3 C9.8 9.8 10.8 10.8 12.8 10.9" fill="none" stroke="#747474" stroke-width="1.9"/></svg>
<svg style="left:279px;top:103px" width="15" height="15" viewBox="0 0 15 15"><rect x="0" y="0" width="5" height="5" fill="#525252"/><rect x="5" y="0" width="5" height="5" fill="#6a6a6a"/><rect x="10" y="0" width="5" height="5" fill="#525252"/><rect x="0" y="5" width="5" height="5" fill="#6a6a6a"/><rect x="5" y="5" width="5" height="5" fill="#525252"/><rect x="10" y="5" width="5" height="5" fill="#6a6a6a"/><rect x="0" y="10" width="5" height="5" fill="#525252"/><rect x="5" y="10" width="5" height="5" fill="#6a6a6a"/><rect x="10" y="10" width="5" height="5" fill="#525252"/></svg>
<div class="a" style="left:0px;top:155px;width:298px;height:1px;background:#3d3d3d"></div>
<div class="a" style="left:23px;top:126px;width:1px;height:29px;background:#3c3c3c"></div>
<svg style="left:0px;top:130px" width="22" height="22" viewBox="0 0 22 22"><path d="M4.3 10.6 A6.8 6.6 0 0 1 17.7 10.6" fill="none" stroke="#d4d4d4" stroke-width="1.5"/><circle cx="11" cy="8.8" r="3.2" fill="#d4d4d4"/><path d="M4.8 12.3 A6.9 6.9 0 0 0 17.2 12.3" fill="none" stroke="#d4d4d4" stroke-width="1.15"/></svg>
<div class="a" style="left:53px;top:126px;width:1px;height:29px;background:#3c3c3c"></div>
<div class="a" style="left:37px;top:136px;width:1px;height:9px;background:#555"></div>
<div class="a" style="left:67px;top:136px;width:1px;height:9px;background:#555"></div>
<div class="a" style="left:67px;top:144px;width:9px;height:1px;background:#555"></div>
<div class="a" style="left:83px;top:126px;width:29px;height:29px;background:#5f4767"></div>
<div class="a" style="left:113px;top:126px;width:14px;height:29px;background:#5f4767"></div>
<div class="a" style="left:128px;top:126px;width:92px;height:29px;background:#5f4767"></div>
<div class="a" style="left:221px;top:126px;width:18px;height:29px;background:#5f4767"></div>
<div class="a" style="left:240px;top:126px;width:18px;height:29px;background:#5f4767"></div>
<div class="a" style="left:259px;top:126px;width:18px;height:29px;background:#5f4767"></div>
<div class="a" style="left:278px;top:126px;width:19px;height:29px;background:#5f4767"></div>
<div class="a" style="left:87px;top:129px;width:21px;height:25px;background:#2a2030"></div>
<div class="a" style="left:88px;top:130px;width:19px;height:23px;background-color:#fff;background-image:repeating-conic-gradient(#dcdcdc 0 25%,#fff 0 50%);background-size:8px 8px"></div>
<div class="a" style="left:95px;top:140px;width:6px;height:3px;background:#ff0000;border-radius:1px"></div>
<svg style="left:114px;top:127px" width="11" height="11" viewBox="0 0 11 11"><path d="M3 1.5 L10.5 1.5 L10.5 8.5 L8.2 10.8 L3.5 10.8 L3.5 8" fill="none" stroke="#d6d6d6" stroke-width="1.3"/><path d="M10.5 8.5 L8.2 8.5 L8.2 10.8 Z" fill="#d6d6d6"/><path d="M1.5 3.5 L6.8 7.6" stroke="#d6d6d6" stroke-width="1.4" stroke-linecap="round"/></svg>
<svg style="left:114px;top:143px" width="12" height="9" viewBox="0 0 12 9"><rect x="0.9" y="1.4" width="10.2" height="6.8" fill="none" stroke="#d6d6d6" stroke-width="1.7"/><path d="M5.3 3.2 L7.8 4.8 L5.3 6.4Z" fill="#d6d6d6"/></svg>
<div class="t" style="left:128px;top:136px;color:#e0e0e0;font-size:11px;letter-spacing:0.8px">Red</div>
<svg style="left:225px;top:135px" width="9" height="12" viewBox="0 0 9 12"><path d="M4.5 0.5 A4 4 0 0 1 8.5 4.8 C8.5 6.5 7 7.5 6.5 9 L2.5 9 C2 7.5 0.5 6.5 0.5 4.8 A4 4 0 0 1 4.5 0.5Z" fill="#8b7692"/><rect x="2.5" y="9.6" width="4" height="2.4" rx="1" fill="#8b7692"/></svg>
<svg style="left:243px;top:133px" width="13" height="14" viewBox="0 0 13 14"><rect x="0" y="6" width="12" height="8" fill="#8b7692"/><path d="M6.5 0.9 Q11 1.5 11.2 6" fill="none" stroke="#8b7692" stroke-width="1.7"/></svg>
<svg style="left:260px;top:134px" width="15" height="13" viewBox="0 0 15 13"><path d="M9.8 4.5 C9 2 7.5 1.2 5.8 1.2 C3 1.2 1 4.5 1 7.5 C1 9.5 2.2 10.8 4 10.8 C6.8 10.8 8.8 7.5 10.2 4.8 M13.2 1.5 C11.8 3.8 10.3 6.5 10 8.3 C9.8 9.8 10.8 10.8 12.8 10.9" fill="none" stroke="#8b7692" stroke-width="1.9"/></svg>
<svg style="left:279px;top:133px" width="15" height="15" viewBox="0 0 15 15"><rect x="0" y="0" width="5" height="5" fill="#6f5a78"/><rect x="5" y="0" width="5" height="5" fill="#8a7692"/><rect x="10" y="0" width="5" height="5" fill="#6f5a78"/><rect x="0" y="5" width="5" height="5" fill="#8a7692"/><rect x="5" y="5" width="5" height="5" fill="#6f5a78"/><rect x="10" y="5" width="5" height="5" fill="#8a7692"/><rect x="0" y="10" width="5" height="5" fill="#6f5a78"/><rect x="5" y="10" width="5" height="5" fill="#8a7692"/><rect x="10" y="10" width="5" height="5" fill="#6f5a78"/></svg>
<div class="a" style="left:0px;top:185px;width:298px;height:1px;background:#3d3d3d"></div>
<div class="a" style="left:23px;top:156px;width:1px;height:29px;background:#3c3c3c"></div>
<svg style="left:0px;top:160px" width="22" height="22" viewBox="0 0 22 22"><path d="M4.3 10.5 A6.8 5.5 0 0 1 17.7 10.5" fill="none" stroke="#5e5e5e" stroke-width="1"/><path d="M4.6 12 A6.9 6 0 0 0 17.4 12" fill="none" stroke="#5e5e5e" stroke-width="1.1"/></svg>
<div class="a" style="left:53px;top:156px;width:1px;height:29px;background:#3c3c3c"></div>
<div class="a" style="left:37px;top:166px;width:1px;height:9px;background:#555"></div>
<div class="a" style="left:67px;top:166px;width:1px;height:9px;background:#555"></div>
<div class="a" style="left:67px;top:174px;width:9px;height:1px;background:#555"></div>
<div class="a" style="left:83px;top:156px;width:29px;height:29px;background:#755a3a"></div>
<div class="a" style="left:113px;top:156px;width:14px;height:29px;background:#755a3a"></div>
<div class="a" style="left:128px;top:156px;width:92px;height:29px;background:#755a3a"></div>
<div class="a" style="left:221px;top:156px;width:18px;height:29px;background:#755a3a"></div>
<div class="a" style="left:240px;top:156px;width:18px;height:29px;background:#755a3a"></div>
<div class="a" style="left:259px;top:156px;width:18px;height:29px;background:#755a3a"></div>
<div class="a" style="left:278px;top:156px;width:19px;height:29px;background:#755a3a"></div>
<div class="a" style="left:85px;top:162px;width:25px;height:19px;background:#3a3022"></div>
<div class="a" style="left:86px;top:163px;width:23px;height:17px;background:#a38c6e"></div>
<svg style="left:114px;top:157px" width="11" height="11" viewBox="0 0 11 11"><path d="M3 1.5 L10.5 1.5 L10.5 8.5 L8.2 10.8 L3.5 10.8 L3.5 8" fill="none" stroke="#a89478" stroke-width="1.3"/><path d="M10.5 8.5 L8.2 8.5 L8.2 10.8 Z" fill="#a89478"/><path d="M1.5 3.5 L6.8 7.6" stroke="#a89478" stroke-width="1.4" stroke-linecap="round"/></svg>
<svg style="left:114px;top:173px" width="12" height="9" viewBox="0 0 12 9"><rect x="0.9" y="1.4" width="10.2" height="6.8" fill="none" stroke="#a89478" stroke-width="1.7"/><path d="M5.3 3.2 L7.8 4.8 L5.3 6.4Z" fill="#a89478"/></svg>
<div class="t" style="left:128px;top:166px;color:#b0a090;font-size:11px;letter-spacing:0.8px">Green</div>
<svg style="left:225px;top:165px" width="9" height="12" viewBox="0 0 9 12"><path d="M4.5 0.5 A4 4 0 0 1 8.5 4.8 C8.5 6.5 7 7.5 6.5 9 L2.5 9 C2 7.5 0.5 6.5 0.5 4.8 A4 4 0 0 1 4.5 0.5Z" fill="#a08866"/><rect x="2.5" y="9.6" width="4" height="2.4" rx="1" fill="#a08866"/></svg>
<svg style="left:243px;top:163px" width="13" height="14" viewBox="0 0 13 14"><rect x="0" y="6" width="12" height="8" fill="#a08866"/><path d="M6.5 0.9 Q11 1.5 11.2 6" fill="none" stroke="#a08866" stroke-width="1.7"/></svg>
<svg style="left:260px;top:164px" width="15" height="13" viewBox="0 0 15 13"><path d="M9.8 4.5 C9 2 7.5 1.2 5.8 1.2 C3 1.2 1 4.5 1 7.5 C1 9.5 2.2 10.8 4 10.8 C6.8 10.8 8.8 7.5 10.2 4.8 M13.2 1.5 C11.8 3.8 10.3 6.5 10 8.3 C9.8 9.8 10.8 10.8 12.8 10.9" fill="none" stroke="#a08866" stroke-width="1.9"/></svg>
<svg style="left:279px;top:163px" width="15" height="15" viewBox="0 0 15 15"><rect x="0" y="0" width="5" height="5" fill="#8a7050"/><rect x="5" y="0" width="5" height="5" fill="#a58c6c"/><rect x="10" y="0" width="5" height="5" fill="#8a7050"/><rect x="0" y="5" width="5" height="5" fill="#a58c6c"/><rect x="5" y="5" width="5" height="5" fill="#8a7050"/><rect x="10" y="5" width="5" height="5" fill="#a58c6c"/><rect x="0" y="10" width="5" height="5" fill="#8a7050"/><rect x="5" y="10" width="5" height="5" fill="#a58c6c"/><rect x="10" y="10" width="5" height="5" fill="#8a7050"/></svg>
<div class="a" style="left:0px;top:215px;width:298px;height:1px;background:#3d3d3d"></div>
<div class="a" style="left:23px;top:186px;width:1px;height:29px;background:#3c3c3c"></div>
<svg style="left:0px;top:190px" width="22" height="22" viewBox="0 0 22 22"><path d="M4.3 10.6 A6.8 6.6 0 0 1 17.7 10.6" fill="none" stroke="#d4d4d4" stroke-width="1.5"/><circle cx="11" cy="8.8" r="3.2" fill="#d4d4d4"/><path d="M4.8 12.3 A6.9 6.9 0 0 0 17.2 12.3" fill="none" stroke="#d4d4d4" stroke-width="1.15"/></svg>
<div class="a" style="left:53px;top:186px;width:1px;height:29px;background:#3c3c3c"></div>
<div class="a" style="left:37px;top:196px;width:1px;height:9px;background:#555"></div>
<div class="a" style="left:67px;top:196px;width:1px;height:9px;background:#555"></div>
<div class="a" style="left:67px;top:204px;width:9px;height:1px;background:#555"></div>
<div class="a" style="left:83px;top:186px;width:29px;height:29px;background:#5b4739"></div>
<div class="a" style="left:113px;top:186px;width:14px;height:29px;background:#5b4739"></div>
<div class="a" style="left:128px;top:186px;width:92px;height:29px;background:#5b4739"></div>
<div class="a" style="left:221px;top:186px;width:18px;height:29px;background:#5b4739"></div>
<div class="a" style="left:240px;top:186px;width:18px;height:29px;background:#5b4739"></div>
<div class="a" style="left:259px;top:186px;width:18px;height:29px;background:#5b4739"></div>
<div class="a" style="left:278px;top:186px;width:19px;height:29px;background:#5b4739"></div>
<div class="a" style="left:85px;top:193px;width:25px;height:17px;background:#2a2a30"></div>
<div class="a" style="left:86px;top:194px;width:23px;height:15px;background-color:#fff;background-image:repeating-conic-gradient(#dcdcdc 0 25%,#fff 0 50%);background-size:8px 8px"></div>
<div class="a" style="left:94px;top:201px;width:8px;height:2px;background:#1060ff;border-radius:1px"></div>
<svg style="left:114px;top:187px" width="11" height="11" viewBox="0 0 11 11"><path d="M3 1.5 L10.5 1.5 L10.5 8.5 L8.2 10.8 L3.5 10.8 L3.5 8" fill="none" stroke="#d6d6d6" stroke-width="1.3"/><path d="M10.5 8.5 L8.2 8.5 L8.2 10.8 Z" fill="#d6d6d6"/><path d="M1.5 3.5 L6.8 7.6" stroke="#d6d6d6" stroke-width="1.4" stroke-linecap="round"/></svg>
<svg style="left:114px;top:203px" width="12" height="9" viewBox="0 0 12 9"><rect x="0.9" y="1.4" width="10.2" height="6.8" fill="none" stroke="#d6d6d6" stroke-width="1.7"/><path d="M5.3 3.2 L7.8 4.8 L5.3 6.4Z" fill="#d6d6d6"/></svg>
<div class="t" style="left:128px;top:196px;color:#e0e0e0;font-size:11px;letter-spacing:0.8px">Blue</div>
<svg style="left:225px;top:195px" width="9" height="12" viewBox="0 0 9 12"><path d="M4.5 0.5 A4 4 0 0 1 8.5 4.8 C8.5 6.5 7 7.5 6.5 9 L2.5 9 C2 7.5 0.5 6.5 0.5 4.8 A4 4 0 0 1 4.5 0.5Z" fill="#8a7868"/><rect x="2.5" y="9.6" width="4" height="2.4" rx="1" fill="#8a7868"/></svg>
<svg style="left:243px;top:193px" width="13" height="14" viewBox="0 0 13 14"><rect x="0" y="6" width="12" height="8" fill="#8a7868"/><path d="M6.5 0.9 Q11 1.5 11.2 6" fill="none" stroke="#8a7868" stroke-width="1.7"/></svg>
<svg style="left:260px;top:194px" width="15" height="13" viewBox="0 0 15 13"><path d="M9.8 4.5 C9 2 7.5 1.2 5.8 1.2 C3 1.2 1 4.5 1 7.5 C1 9.5 2.2 10.8 4 10.8 C6.8 10.8 8.8 7.5 10.2 4.8 M13.2 1.5 C11.8 3.8 10.3 6.5 10 8.3 C9.8 9.8 10.8 10.8 12.8 10.9" fill="none" stroke="#8a7868" stroke-width="1.9"/></svg>
<svg style="left:279px;top:193px" width="15" height="15" viewBox="0 0 15 15"><rect x="0" y="0" width="5" height="5" fill="#6f5c4e"/><rect x="5" y="0" width="5" height="5" fill="#8a7868"/><rect x="10" y="0" width="5" height="5" fill="#6f5c4e"/><rect x="0" y="5" width="5" height="5" fill="#8a7868"/><rect x="5" y="5" width="5" height="5" fill="#6f5c4e"/><rect x="10" y="5" width="5" height="5" fill="#8a7868"/><rect x="0" y="10" width="5" height="5" fill="#6f5c4e"/><rect x="5" y="10" width="5" height="5" fill="#8a7868"/><rect x="10" y="10" width="5" height="5" fill="#6f5c4e"/></svg>
<div class="a" style="left:0px;top:245px;width:298px;height:1px;background:#3d3d3d"></div>
<div class="a" style="left:23px;top:216px;width:1px;height:29px;background:#3c3c3c"></div>
<svg style="left:0px;top:220px" width="22" height="22" viewBox="0 0 22 22"><path d="M4.3 10.6 A6.8 6.6 0 0 1 17.7 10.6" fill="none" stroke="#d4d4d4" stroke-width="1.5"/><circle cx="11" cy="8.8" r="3.2" fill="#d4d4d4"/><path d="M4.8 12.3 A6.9 6.9 0 0 0 17.2 12.3" fill="none" stroke="#d4d4d4" stroke-width="1.15"/></svg>
<div class="a" style="left:53px;top:216px;width:1px;height:29px;background:#3c3c3c"></div>
<div class="a" style="left:37px;top:226px;width:1px;height:9px;background:#555"></div>
<div class="a" style="left:67px;top:226px;width:1px;height:9px;background:#555"></div>
<div class="a" style="left:67px;top:234px;width:9px;height:1px;background:#555"></div>
<div class="a" style="left:83px;top:216px;width:29px;height:29px;background:#6e3638"></div>
<div class="a" style="left:113px;top:216px;width:14px;height:29px;background:#6e3638"></div>
<div class="a" style="left:128px;top:216px;width:92px;height:29px;background:#6e3638"></div>
<div class="a" style="left:221px;top:216px;width:18px;height:29px;background:#6e3638"></div>
<div class="a" style="left:240px;top:216px;width:18px;height:29px;background:#6e3638"></div>
<div class="a" style="left:259px;top:216px;width:18px;height:29px;background:#6e3638"></div>
<div class="a" style="left:278px;top:216px;width:19px;height:29px;background:#6e3638"></div>
<div class="a" style="left:85px;top:223px;width:25px;height:17px;background:#2a2a30"></div>
<div class="a" style="left:86px;top:224px;width:23px;height:15px;background-color:#fff;background-image:repeating-conic-gradient(#dcdcdc 0 25%,#fff 0 50%);background-size:8px 8px"></div>
<div class="a" style="left:94px;top:231px;width:8px;height:2px;background:#1060ff;border-radius:1px"></div>
<svg style="left:114px;top:217px" width="11" height="11" viewBox="0 0 11 11"><path d="M3 1.5 L10.5 1.5 L10.5 8.5 L8.2 10.8 L3.5 10.8 L3.5 8" fill="none" stroke="#d6d6d6" stroke-width="1.3"/><path d="M10.5 8.5 L8.2 8.5 L8.2 10.8 Z" fill="#d6d6d6"/><path d="M1.5 3.5 L6.8 7.6" stroke="#d6d6d6" stroke-width="1.4" stroke-linecap="round"/></svg>
<svg style="left:114px;top:233px" width="12" height="9" viewBox="0 0 12 9"><rect x="0.9" y="1.4" width="10.2" height="6.8" fill="none" stroke="#d6d6d6" stroke-width="1.7"/><path d="M5.3 3.2 L7.8 4.8 L5.3 6.4Z" fill="#d6d6d6"/></svg>
<div class="t" style="left:128px;top:226px;color:#e0e0e0;font-size:11px;letter-spacing:0.8px">Shadow</div>
<svg style="left:225px;top:225px" width="9" height="12" viewBox="0 0 9 12"><path d="M4.5 0.5 A4 4 0 0 1 8.5 4.8 C8.5 6.5 7 7.5 6.5 9 L2.5 9 C2 7.5 0.5 6.5 0.5 4.8 A4 4 0 0 1 4.5 0.5Z" fill="#9a6a6c"/><rect x="2.5" y="9.6" width="4" height="2.4" rx="1" fill="#9a6a6c"/></svg>
<svg style="left:243px;top:223px" width="13" height="14" viewBox="0 0 13 14"><rect x="0" y="6" width="12" height="8" fill="#9a6a6c"/><path d="M6.5 0.9 Q11 1.5 11.2 6" fill="none" stroke="#9a6a6c" stroke-width="1.7"/></svg>
<svg style="left:260px;top:224px" width="15" height="13" viewBox="0 0 15 13"><path d="M9.8 4.5 C9 2 7.5 1.2 5.8 1.2 C3 1.2 1 4.5 1 7.5 C1 9.5 2.2 10.8 4 10.8 C6.8 10.8 8.8 7.5 10.2 4.8 M13.2 1.5 C11.8 3.8 10.3 6.5 10 8.3 C9.8 9.8 10.8 10.8 12.8 10.9" fill="none" stroke="#9a6a6c" stroke-width="1.9"/></svg>
<svg style="left:279px;top:223px" width="15" height="15" viewBox="0 0 15 15"><rect x="0" y="0" width="5" height="5" fill="#7e4c4e"/><rect x="5" y="0" width="5" height="5" fill="#9a6a6c"/><rect x="10" y="0" width="5" height="5" fill="#7e4c4e"/><rect x="0" y="5" width="5" height="5" fill="#9a6a6c"/><rect x="5" y="5" width="5" height="5" fill="#7e4c4e"/><rect x="10" y="5" width="5" height="5" fill="#9a6a6c"/><rect x="0" y="10" width="5" height="5" fill="#7e4c4e"/><rect x="5" y="10" width="5" height="5" fill="#9a6a6c"/><rect x="10" y="10" width="5" height="5" fill="#7e4c4e"/></svg>
<div class="a" style="left:0px;top:275px;width:298px;height:1px;background:#3d3d3d"></div>
<div class="a" style="left:23px;top:246px;width:1px;height:29px;background:#3c3c3c"></div>
<svg style="left:0px;top:250px" width="22" height="22" viewBox="0 0 22 22"><path d="M4.3 10.6 A6.8 6.6 0 0 1 17.7 10.6" fill="none" stroke="#d4d4d4" stroke-width="1.5"/><circle cx="11" cy="8.8" r="3.2" fill="#d4d4d4"/><path d="M4.8 12.3 A6.9 6.9 0 0 0 17.2 12.3" fill="none" stroke="#d4d4d4" stroke-width="1.15"/></svg>
<div class="a" style="left:53px;top:246px;width:1px;height:29px;background:#3c3c3c"></div>
<div class="a" style="left:37px;top:256px;width:1px;height:9px;background:#555"></div>
<div class="a" style="left:67px;top:256px;width:1px;height:9px;background:#555"></div>
<div class="a" style="left:67px;top:264px;width:9px;height:1px;background:#555"></div>
<div class="a" style="left:86px;top:250px;width:23px;height:23px;background-color:#fff;background-image:repeating-conic-gradient(#dcdcdc 0 25%,#fff 0 50%);background-size:8px 8px"></div>
<svg style="left:115px;top:248px" width="11" height="11" viewBox="0 0 11 11"><path d="M0.6 1.2 L5 1.2 L6.5 2.6 L10.4 2.6 L10.4 10.4 L0.6 10.4 Z" fill="none" stroke="#d6d6d6" stroke-width="1.1"/><path d="M0.6 1.2 L4 0.6 L5.5 2.6 L0.6 3.6Z" fill="#d6d6d6"/><path d="M0.6 3.5 L10.4 3.5" stroke="#d6d6d6" stroke-width="1"/></svg>
<div class="t" style="left:128px;top:255px;color:#d8d8d8">Coloring</div>
<svg style="left:243px;top:253px" width="13" height="14" viewBox="0 0 13 14"><rect x="0" y="6" width="12" height="8" fill="#747474"/><path d="M6.5 0.9 Q11 1.5 11.2 6" fill="none" stroke="#747474" stroke-width="1.7"/></svg>
<svg style="left:260px;top:254px" width="15" height="13" viewBox="0 0 15 13"><path d="M9.8 4.5 C9 2 7.5 1.2 5.8 1.2 C3 1.2 1 4.5 1 7.5 C1 9.5 2.2 10.8 4 10.8 C6.8 10.8 8.8 7.5 10.2 4.8 M13.2 1.5 C11.8 3.8 10.3 6.5 10 8.3 C9.8 9.8 10.8 10.8 12.8 10.9" fill="none" stroke="#747474" stroke-width="1.9"/></svg>
<svg style="left:280px;top:255px" width="15" height="11" viewBox="0 0 15 11"><rect x="0" y="0" width="7" height="3" fill="#6e6e6e"/><rect x="8" y="0" width="7" height="3" fill="#6e6e6e"/><rect x="0" y="4" width="2.5" height="3" fill="#6e6e6e"/><rect x="3.5" y="4" width="7.5" height="3" fill="#6e6e6e"/><rect x="12" y="4" width="3" height="3" fill="#6e6e6e"/><rect x="0" y="8" width="7" height="3" fill="#6e6e6e"/><rect x="8" y="8" width="7" height="3" fill="#6e6e6e"/></svg>
<div class="a" style="left:0px;top:305px;width:298px;height:1px;background:#3d3d3d"></div>
<div class="a" style="left:23px;top:276px;width:1px;height:29px;background:#3c3c3c"></div>
<svg style="left:0px;top:280px" width="22" height="22" viewBox="0 0 22 22"><path d="M4.3 10.6 A6.8 6.6 0 0 1 17.7 10.6" fill="none" stroke="#d4d4d4" stroke-width="1.5"/><circle cx="11" cy="8.8" r="3.2" fill="#d4d4d4"/><path d="M4.8 12.3 A6.9 6.9 0 0 0 17.2 12.3" fill="none" stroke="#d4d4d4" stroke-width="1.15"/></svg>
<div class="a" style="left:26px;top:280px;width:23px;height:23px;background-color:#fff;background-image:repeating-conic-gradient(#dcdcdc 0 25%,#fff 0 50%);background-size:8px 8px"></div>
<svg style="left:55px;top:278px" width="11" height="11" viewBox="0 0 11 11"><path d="M0.6 1.2 L5 1.2 L6.5 2.6 L10.4 2.6 L10.4 10.4 L0.6 10.4 Z" fill="none" stroke="#d6d6d6" stroke-width="1.1"/><path d="M0.6 1.2 L4 0.6 L5.5 2.6 L0.6 3.6Z" fill="#d6d6d6"/><path d="M0.6 3.5 L10.4 3.5" stroke="#d6d6d6" stroke-width="1"/></svg>
<svg style="left:54px;top:295px" width="11" height="6" viewBox="0 0 11 6"><path d="M0.7 0.7 L5.5 5.3 L10.3 0.7" fill="none" stroke="#d6d6d6" stroke-width="1.4"/></svg>
<div class="t" style="left:68px;top:285px;color:#d8d8d8">Keys</div>
<svg style="left:243px;top:283px" width="13" height="14" viewBox="0 0 13 14"><rect x="0" y="6" width="12" height="8" fill="#747474"/><path d="M6.5 0.9 Q11 1.5 11.2 6" fill="none" stroke="#747474" stroke-width="1.7"/></svg>
<svg style="left:260px;top:284px" width="15" height="13" viewBox="0 0 15 13"><path d="M9.8 4.5 C9 2 7.5 1.2 5.8 1.2 C3 1.2 1 4.5 1 7.5 C1 9.5 2.2 10.8 4 10.8 C6.8 10.8 8.8 7.5 10.2 4.8 M13.2 1.5 C11.8 3.8 10.3 6.5 10 8.3 C9.8 9.8 10.8 10.8 12.8 10.9" fill="none" stroke="#747474" stroke-width="1.9"/></svg>
<svg style="left:280px;top:285px" width="15" height="11" viewBox="0 0 15 11"><rect x="0" y="0" width="7" height="3" fill="#6e6e6e"/><rect x="8" y="0" width="7" height="3" fill="#6e6e6e"/><rect x="0" y="4" width="2.5" height="3" fill="#6e6e6e"/><rect x="3.5" y="4" width="7.5" height="3" fill="#6e6e6e"/><rect x="12" y="4" width="3" height="3" fill="#6e6e6e"/><rect x="0" y="8" width="7" height="3" fill="#6e6e6e"/><rect x="8" y="8" width="7" height="3" fill="#6e6e6e"/></svg>
<div class="a" style="left:0px;top:335px;width:298px;height:1px;background:#3d3d3d"></div>
<div class="a" style="left:23px;top:306px;width:1px;height:29px;background:#3c3c3c"></div>
<svg style="left:0px;top:310px" width="22" height="22" viewBox="0 0 22 22"><path d="M4.3 10.5 A6.8 5.5 0 0 1 17.7 10.5" fill="none" stroke="#5e5e5e" stroke-width="1"/><path d="M4.6 12 A6.9 6 0 0 0 17.4 12" fill="none" stroke="#5e5e5e" stroke-width="1.1"/></svg>
<div class="a" style="left:53px;top:306px;width:1px;height:29px;background:#3c3c3c"></div>
<div class="a" style="left:35px;top:317px;width:1px;height:8px;background:#555"></div>
<div class="a" style="left:35px;top:324px;width:9px;height:1px;background:#555"></div>
<div class="a" style="left:58px;top:310px;width:18px;height:23px;background-color:#777;background-image:repeating-conic-gradient(#6e6e6e 0 25%,#7a7a7a 0 50%);background-size:8px 8px"></div>
<svg style="left:85px;top:308px" width="11" height="11" viewBox="0 0 11 11"><path d="M0.6 1.2 L5 1.2 L6.5 2.6 L10.4 2.6 L10.4 10.4 L0.6 10.4 Z" fill="none" stroke="#8a8a8a" stroke-width="1.1"/><path d="M0.6 1.2 L4 0.6 L5.5 2.6 L0.6 3.6Z" fill="#8a8a8a"/><path d="M0.6 3.5 L10.4 3.5" stroke="#8a8a8a" stroke-width="1"/></svg>
<svg style="left:84px;top:325px" width="11" height="6" viewBox="0 0 11 6"><path d="M0.7 0.7 L5.5 5.3 L10.3 0.7" fill="none" stroke="#d6d6d6" stroke-width="1.4"/></svg>
<svg style="left:98px;top:317px" width="9" height="8" viewBox="0 0 9 8"><path d="M0.5 7.5 L4.5 0.5 L8.5 7.5 M2 5 L7 5" fill="none" stroke="#d6d6d6" stroke-width="1"/></svg>
<svg style="left:243px;top:313px" width="13" height="14" viewBox="0 0 13 14"><rect x="0" y="6" width="12" height="8" fill="#747474"/><path d="M6.5 0.9 Q11 1.5 11.2 6" fill="none" stroke="#747474" stroke-width="1.7"/></svg>
<svg style="left:260px;top:314px" width="15" height="13" viewBox="0 0 15 13"><path d="M9.8 4.5 C9 2 7.5 1.2 5.8 1.2 C3 1.2 1 4.5 1 7.5 C1 9.5 2.2 10.8 4 10.8 C6.8 10.8 8.8 7.5 10.2 4.8 M13.2 1.5 C11.8 3.8 10.3 6.5 10 8.3 C9.8 9.8 10.8 10.8 12.8 10.9" fill="none" stroke="#747474" stroke-width="1.9"/></svg>
<svg style="left:280px;top:315px" width="15" height="11" viewBox="0 0 15 11"><rect x="0" y="0" width="7" height="3" fill="#6e6e6e"/><rect x="8" y="0" width="7" height="3" fill="#6e6e6e"/><rect x="0" y="4" width="2.5" height="3" fill="#6e6e6e"/><rect x="3.5" y="4" width="7.5" height="3" fill="#6e6e6e"/><rect x="12" y="4" width="3" height="3" fill="#6e6e6e"/><rect x="0" y="8" width="7" height="3" fill="#6e6e6e"/><rect x="8" y="8" width="7" height="3" fill="#6e6e6e"/></svg>
<div class="a" style="left:0px;top:365px;width:298px;height:1px;background:#3d3d3d"></div>
<div class="a" style="left:23px;top:336px;width:1px;height:29px;background:#3c3c3c"></div>
<svg style="left:0px;top:340px" width="22" height="22" viewBox="0 0 22 22"><path d="M4.3 10.6 A6.8 6.6 0 0 1 17.7 10.6" fill="none" stroke="#d4d4d4" stroke-width="1.5"/><circle cx="11" cy="8.8" r="3.2" fill="#d4d4d4"/><path d="M4.8 12.3 A6.9 6.9 0 0 0 17.2 12.3" fill="none" stroke="#d4d4d4" stroke-width="1.15"/></svg>
<div class="a" style="left:53px;top:336px;width:1px;height:29px;background:#3c3c3c"></div>
<div class="a" style="left:37px;top:346px;width:1px;height:9px;background:#555"></div>
<div class="a" style="left:67px;top:346px;width:1px;height:9px;background:#555"></div>
<div class="a" style="left:67px;top:354px;width:9px;height:1px;background:#555"></div>
<div class="a" style="left:83px;top:336px;width:1px;height:29px;background:#3c3c3c"></div>
<div class="a" style="left:112px;top:336px;width:1px;height:29px;background:#3c3c3c"></div>
<div class="a" style="left:127px;top:336px;width:1px;height:29px;background:#3c3c3c"></div>
<div class="a" style="left:86px;top:340px;width:23px;height:23px;background-color:#777;background-image:repeating-conic-gradient(#6e6e6e 0 25%,#7a7a7a 0 50%);background-size:8px 8px"></div>
<svg style="left:114px;top:337px" width="11" height="11" viewBox="0 0 11 11"><path d="M3 1.5 L10.5 1.5 L10.5 8.5 L8.2 10.8 L3.5 10.8 L3.5 8" fill="none" stroke="#8e8e8e" stroke-width="1.3"/><path d="M10.5 8.5 L8.2 8.5 L8.2 10.8 Z" fill="#8e8e8e"/><path d="M1.5 3.5 L6.8 7.6" stroke="#8e8e8e" stroke-width="1.4" stroke-linecap="round"/></svg>
<svg style="left:114px;top:353px" width="12" height="9" viewBox="0 0 12 9"><rect x="0.9" y="1.4" width="10.2" height="6.8" fill="none" stroke="#8e8e8e" stroke-width="1.7"/><path d="M5.3 3.2 L7.8 4.8 L5.3 6.4Z" fill="#8e8e8e"/></svg>
<div class="t" style="left:128px;top:345px;color:#b4b4b4;font-size:11px">Blaack</div>
<svg style="left:220px;top:341px" width="17" height="17" viewBox="0 0 17 17"><g transform="translate(4,3)"><path d="M4.5 0.5 A4 4 0 0 1 8.5 4.8 C8.5 6.5 7 7.5 6.5 9 L2.5 9 C2 7.5 0.5 6.5 0.5 4.8 A4 4 0 0 1 4.5 0.5Z" fill="#8c8c8c"/><rect x="2.5" y="9.6" width="4" height="2.4" rx="1" fill="#8c8c8c"/></g><path d="M8.5 0 L8.5 2 M2 3 L3.5 4.5 M15 3 L13.5 4.5 M0 8.5 L2 8.5 M15 8.5 L17 8.5" stroke="#8c8c8c" stroke-width="1"/></svg>
<svg style="left:243px;top:343px" width="13" height="14" viewBox="0 0 13 14"><rect x="0" y="6" width="12" height="8" fill="#747474"/><path d="M6.5 0.9 Q11 1.5 11.2 6" fill="none" stroke="#747474" stroke-width="1.7"/></svg>
<svg style="left:260px;top:344px" width="15" height="13" viewBox="0 0 15 13"><path d="M9.8 4.5 C9 2 7.5 1.2 5.8 1.2 C3 1.2 1 4.5 1 7.5 C1 9.5 2.2 10.8 4 10.8 C6.8 10.8 8.8 7.5 10.2 4.8 M13.2 1.5 C11.8 3.8 10.3 6.5 10 8.3 C9.8 9.8 10.8 10.8 12.8 10.9" fill="none" stroke="#747474" stroke-width="1.9"/></svg>
<svg style="left:279px;top:343px" width="15" height="15" viewBox="0 0 15 15"><rect x="0" y="0" width="5" height="5" fill="#525252"/><rect x="5" y="0" width="5" height="5" fill="#6a6a6a"/><rect x="10" y="0" width="5" height="5" fill="#525252"/><rect x="0" y="5" width="5" height="5" fill="#6a6a6a"/><rect x="5" y="5" width="5" height="5" fill="#525252"/><rect x="10" y="5" width="5" height="5" fill="#6a6a6a"/><rect x="0" y="10" width="5" height="5" fill="#525252"/><rect x="5" y="10" width="5" height="5" fill="#6a6a6a"/><rect x="10" y="10" width="5" height="5" fill="#525252"/></svg>
<div class="a" style="left:0px;top:395px;width:298px;height:1px;background:#3d3d3d"></div>
<div class="a" style="left:23px;top:366px;width:1px;height:29px;background:#3c3c3c"></div>
<svg style="left:0px;top:370px" width="22" height="22" viewBox="0 0 22 22"><path d="M4.3 10.6 A6.8 6.6 0 0 1 17.7 10.6" fill="none" stroke="#d4d4d4" stroke-width="1.5"/><circle cx="11" cy="8.8" r="3.2" fill="#d4d4d4"/><path d="M4.8 12.3 A6.9 6.9 0 0 0 17.2 12.3" fill="none" stroke="#d4d4d4" stroke-width="1.15"/></svg>
<div class="a" style="left:53px;top:366px;width:1px;height:29px;background:#3c3c3c"></div>
<div class="a" style="left:37px;top:376px;width:1px;height:9px;background:#555"></div>
<div class="a" style="left:67px;top:376px;width:1px;height:9px;background:#555"></div>
<div class="a" style="left:67px;top:384px;width:9px;height:1px;background:#555"></div>
<div class="a" style="left:83px;top:366px;width:29px;height:29px;background:#5f4767"></div>
<div class="a" style="left:113px;top:366px;width:14px;height:29px;background:#5f4767"></div>
<div class="a" style="left:128px;top:366px;width:92px;height:29px;background:#5f4767"></div>
<div class="a" style="left:221px;top:366px;width:18px;height:29px;background:#5f4767"></div>
<div class="a" style="left:240px;top:366px;width:18px;height:29px;background:#5f4767"></div>
<div class="a" style="left:259px;top:366px;width:18px;height:29px;background:#5f4767"></div>
<div class="a" style="left:278px;top:366px;width:19px;height:29px;background:#5f4767"></div>
<div class="a" style="left:85px;top:369px;width:25px;height:25px;background:#2a2a2a"></div>
<div class="a" style="left:86px;top:370px;width:23px;height:23px;background-color:#a68aa8;background-image:repeating-conic-gradient(#9a7e9c 0 25%,#a68aa8 0 50%);background-size:8px 8px"></div>
<svg style="left:114px;top:367px" width="11" height="11" viewBox="0 0 11 11"><path d="M3 1.5 L10.5 1.5 L10.5 8.5 L8.2 10.8 L3.5 10.8 L3.5 8" fill="none" stroke="#a696ab" stroke-width="1.3"/><path d="M10.5 8.5 L8.2 8.5 L8.2 10.8 Z" fill="#a696ab"/><path d="M1.5 3.5 L6.8 7.6" stroke="#a696ab" stroke-width="1.4" stroke-linecap="round"/></svg>
<svg style="left:114px;top:383px" width="12" height="9" viewBox="0 0 12 9"><rect x="0.9" y="1.4" width="10.2" height="6.8" fill="none" stroke="#a696ab" stroke-width="1.7"/><path d="M5.3 3.2 L7.8 4.8 L5.3 6.4Z" fill="#a696ab"/></svg>
<div class="t" style="left:128px;top:376px;color:#c0b2c4;font-size:11px;letter-spacing:0.8px">Red</div>
<svg style="left:225px;top:375px" width="9" height="12" viewBox="0 0 9 12"><path d="M4.5 0.5 A4 4 0 0 1 8.5 4.8 C8.5 6.5 7 7.5 6.5 9 L2.5 9 C2 7.5 0.5 6.5 0.5 4.8 A4 4 0 0 1 4.5 0.5Z" fill="#8b7692"/><rect x="2.5" y="9.6" width="4" height="2.4" rx="1" fill="#8b7692"/></svg>
<svg style="left:243px;top:373px" width="13" height="14" viewBox="0 0 13 14"><rect x="0" y="6" width="12" height="8" fill="#8b7692"/><path d="M6.5 0.9 Q11 1.5 11.2 6" fill="none" stroke="#8b7692" stroke-width="1.7"/></svg>
<svg style="left:260px;top:374px" width="15" height="13" viewBox="0 0 15 13"><path d="M9.8 4.5 C9 2 7.5 1.2 5.8 1.2 C3 1.2 1 4.5 1 7.5 C1 9.5 2.2 10.8 4 10.8 C6.8 10.8 8.8 7.5 10.2 4.8 M13.2 1.5 C11.8 3.8 10.3 6.5 10 8.3 C9.8 9.8 10.8 10.8 12.8 10.9" fill="none" stroke="#8b7692" stroke-width="1.9"/></svg>
<svg style="left:279px;top:373px" width="15" height="15" viewBox="0 0 15 15"><rect x="0" y="0" width="5" height="5" fill="#6f5a78"/><rect x="5" y="0" width="5" height="5" fill="#8a7692"/><rect x="10" y="0" width="5" height="5" fill="#6f5a78"/><rect x="0" y="5" width="5" height="5" fill="#8a7692"/><rect x="5" y="5" width="5" height="5" fill="#6f5a78"/><rect x="10" y="5" width="5" height="5" fill="#8a7692"/><rect x="0" y="10" width="5" height="5" fill="#6f5a78"/><rect x="5" y="10" width="5" height="5" fill="#8a7692"/><rect x="10" y="10" width="5" height="5" fill="#6f5a78"/></svg>
<div class="a" style="left:0px;top:425px;width:298px;height:1px;background:#3d3d3d"></div>
<div class="a" style="left:23px;top:396px;width:1px;height:29px;background:#3c3c3c"></div>
<svg style="left:0px;top:400px" width="22" height="22" viewBox="0 0 22 22"><path d="M4.3 10.6 A6.8 6.6 0 0 1 17.7 10.6" fill="none" stroke="#d4d4d4" stroke-width="1.5"/><circle cx="11" cy="8.8" r="3.2" fill="#d4d4d4"/><path d="M4.8 12.3 A6.9 6.9 0 0 0 17.2 12.3" fill="none" stroke="#d4d4d4" stroke-width="1.15"/></svg>
<div class="a" style="left:53px;top:396px;width:1px;height:29px;background:#3c3c3c"></div>
<div class="a" style="left:37px;top:406px;width:1px;height:9px;background:#555"></div>
<div class="a" style="left:67px;top:406px;width:1px;height:9px;background:#555"></div>
<div class="a" style="left:67px;top:414px;width:9px;height:1px;background:#555"></div>
<div class="a" style="left:83px;top:396px;width:29px;height:29px;background:#755a3a"></div>
<div class="a" style="left:113px;top:396px;width:14px;height:29px;background:#755a3a"></div>
<div class="a" style="left:128px;top:396px;width:112px;height:29px;background:#755a3a"></div>
<div class="a" style="left:240px;top:396px;width:18px;height:29px;background:#755a3a"></div>
<div class="a" style="left:259px;top:396px;width:18px;height:29px;background:#755a3a"></div>
<div class="a" style="left:278px;top:396px;width:19px;height:29px;background:#755a3a"></div>
<div class="a" style="left:85px;top:399px;width:25px;height:25px;background:#2a2a2a"></div>
<div class="a" style="left:86px;top:400px;width:23px;height:23px;background-color:#b59c7e;background-image:repeating-conic-gradient(#a8906f 0 25%,#b59c7e 0 50%);background-size:8px 8px"></div>
<svg style="left:114px;top:397px" width="11" height="11" viewBox="0 0 11 11"><path d="M3 1.5 L10.5 1.5 L10.5 8.5 L8.2 10.8 L3.5 10.8 L3.5 8" fill="none" stroke="#b9a283" stroke-width="1.3"/><path d="M10.5 8.5 L8.2 8.5 L8.2 10.8 Z" fill="#b9a283"/><path d="M1.5 3.5 L6.8 7.6" stroke="#b9a283" stroke-width="1.4" stroke-linecap="round"/></svg>
<div class="t" style="left:128px;top:406px;color:#cbbda8;font-size:11px;letter-spacing:0.8px">Green</div>
<svg style="left:243px;top:403px" width="13" height="14" viewBox="0 0 13 14"><rect x="0" y="6" width="12" height="8" fill="#a58c6c"/><path d="M6.5 0.9 Q11 1.5 11.2 6" fill="none" stroke="#a58c6c" stroke-width="1.7"/></svg>
<svg style="left:260px;top:404px" width="15" height="13" viewBox="0 0 15 13"><path d="M9.8 4.5 C9 2 7.5 1.2 5.8 1.2 C3 1.2 1 4.5 1 7.5 C1 9.5 2.2 10.8 4 10.8 C6.8 10.8 8.8 7.5 10.2 4.8 M13.2 1.5 C11.8 3.8 10.3 6.5 10 8.3 C9.8 9.8 10.8 10.8 12.8 10.9" fill="none" stroke="#a58c6c" stroke-width="1.9"/></svg>
<svg style="left:279px;top:403px" width="15" height="15" viewBox="0 0 15 15"><rect x="0" y="0" width="5" height="5" fill="#8a7050"/><rect x="5" y="0" width="5" height="5" fill="#a58c6c"/><rect x="10" y="0" width="5" height="5" fill="#8a7050"/><rect x="0" y="5" width="5" height="5" fill="#a58c6c"/><rect x="5" y="5" width="5" height="5" fill="#8a7050"/><rect x="10" y="5" width="5" height="5" fill="#a58c6c"/><rect x="0" y="10" width="5" height="5" fill="#8a7050"/><rect x="5" y="10" width="5" height="5" fill="#a58c6c"/><rect x="10" y="10" width="5" height="5" fill="#8a7050"/></svg>
<div class="a" style="left:0px;top:455px;width:298px;height:1px;background:#3d3d3d"></div>
<div class="a" style="left:23px;top:426px;width:1px;height:29px;background:#3c3c3c"></div>
<svg style="left:0px;top:430px" width="22" height="22" viewBox="0 0 22 22"><path d="M4.3 10.5 A6.8 5.5 0 0 1 17.7 10.5" fill="none" stroke="#5e5e5e" stroke-width="1"/><path d="M4.6 12 A6.9 6 0 0 0 17.4 12" fill="none" stroke="#5e5e5e" stroke-width="1.1"/></svg>
<div class="a" style="left:53px;top:426px;width:1px;height:29px;background:#3c3c3c"></div>
<div class="a" style="left:37px;top:436px;width:1px;height:9px;background:#555"></div>
<div class="a" style="left:67px;top:436px;width:1px;height:9px;background:#555"></div>
<div class="a" style="left:67px;top:444px;width:9px;height:1px;background:#555"></div>
<div class="a" style="left:83px;top:426px;width:29px;height:29px;background:#5b4739"></div>
<div class="a" style="left:113px;top:426px;width:14px;height:29px;background:#5b4739"></div>
<div class="a" style="left:128px;top:426px;width:92px;height:29px;background:#5b4739"></div>
<div class="a" style="left:221px;top:426px;width:18px;height:29px;background:#5b4739"></div>
<div class="a" style="left:240px;top:426px;width:18px;height:29px;background:#5b4739"></div>
<div class="a" style="left:259px;top:426px;width:18px;height:29px;background:#5b4739"></div>
<div class="a" style="left:278px;top:426px;width:19px;height:29px;background:#5b4739"></div>
<div class="a" style="left:85px;top:429px;width:25px;height:25px;background:#2a2a2a"></div>
<div class="a" style="left:86px;top:430px;width:23px;height:23px;background-color:#9a8478;background-image:repeating-conic-gradient(#8d776b 0 25%,#9a8478 0 50%);background-size:8px 8px"></div>
<svg style="left:114px;top:427px" width="11" height="11" viewBox="0 0 11 11"><path d="M3 1.5 L10.5 1.5 L10.5 8.5 L8.2 10.8 L3.5 10.8 L3.5 8" fill="none" stroke="#a29184" stroke-width="1.3"/><path d="M10.5 8.5 L8.2 8.5 L8.2 10.8 Z" fill="#a29184"/><path d="M1.5 3.5 L6.8 7.6" stroke="#a29184" stroke-width="1.4" stroke-linecap="round"/></svg>
<svg style="left:114px;top:443px" width="12" height="9" viewBox="0 0 12 9"><rect x="0.9" y="1.4" width="10.2" height="6.8" fill="none" stroke="#a29184" stroke-width="1.7"/><path d="M5.3 3.2 L7.8 4.8 L5.3 6.4Z" fill="#a29184"/></svg>
<div class="t" style="left:128px;top:436px;color:#bdb2aa;font-size:11px;letter-spacing:0.8px">Blue</div>
<svg style="left:225px;top:435px" width="9" height="12" viewBox="0 0 9 12"><path d="M4.5 0.5 A4 4 0 0 1 8.5 4.8 C8.5 6.5 7 7.5 6.5 9 L2.5 9 C2 7.5 0.5 6.5 0.5 4.8 A4 4 0 0 1 4.5 0.5Z" fill="#8a7868"/><rect x="2.5" y="9.6" width="4" height="2.4" rx="1" fill="#8a7868"/></svg>
<svg style="left:243px;top:433px" width="13" height="14" viewBox="0 0 13 14"><rect x="0" y="6" width="12" height="8" fill="#8a7868"/><path d="M6.5 0.9 Q11 1.5 11.2 6" fill="none" stroke="#8a7868" stroke-width="1.7"/></svg>
<svg style="left:260px;top:434px" width="15" height="13" viewBox="0 0 15 13"><path d="M9.8 4.5 C9 2 7.5 1.2 5.8 1.2 C3 1.2 1 4.5 1 7.5 C1 9.5 2.2 10.8 4 10.8 C6.8 10.8 8.8 7.5 10.2 4.8 M13.2 1.5 C11.8 3.8 10.3 6.5 10 8.3 C9.8 9.8 10.8 10.8 12.8 10.9" fill="none" stroke="#8a7868" stroke-width="1.9"/></svg>
<svg style="left:279px;top:433px" width="15" height="15" viewBox="0 0 15 15"><rect x="0" y="0" width="5" height="5" fill="#6f5c4e"/><rect x="5" y="0" width="5" height="5" fill="#8a7868"/><rect x="10" y="0" width="5" height="5" fill="#6f5c4e"/><rect x="0" y="5" width="5" height="5" fill="#8a7868"/><rect x="5" y="5" width="5" height="5" fill="#6f5c4e"/><rect x="10" y="5" width="5" height="5" fill="#8a7868"/><rect x="0" y="10" width="5" height="5" fill="#6f5c4e"/><rect x="5" y="10" width="5" height="5" fill="#8a7868"/><rect x="10" y="10" width="5" height="5" fill="#6f5c4e"/></svg>
<div class="a" style="left:0px;top:485px;width:298px;height:1px;background:#3d3d3d"></div>
<div class="a" style="left:23px;top:456px;width:1px;height:29px;background:#3c3c3c"></div>
<svg style="left:0px;top:460px" width="22" height="22" viewBox="0 0 22 22"><path d="M4.3 10.6 A6.8 6.6 0 0 1 17.7 10.6" fill="none" stroke="#d4d4d4" stroke-width="1.5"/><circle cx="11" cy="8.8" r="3.2" fill="#d4d4d4"/><path d="M4.8 12.3 A6.9 6.9 0 0 0 17.2 12.3" fill="none" stroke="#d4d4d4" stroke-width="1.15"/></svg>
<div class="a" style="left:53px;top:456px;width:1px;height:29px;background:#3c3c3c"></div>
<div class="a" style="left:37px;top:466px;width:1px;height:9px;background:#555"></div>
<div class="a" style="left:67px;top:466px;width:1px;height:9px;background:#555"></div>
<div class="a" style="left:67px;top:474px;width:9px;height:1px;background:#555"></div>
<div class="a" style="left:83px;top:456px;width:29px;height:29px;background:#6e3638"></div>
<div class="a" style="left:113px;top:456px;width:14px;height:29px;background:#6e3638"></div>
<div class="a" style="left:128px;top:456px;width:92px;height:29px;background:#6e3638"></div>
<div class="a" style="left:221px;top:456px;width:18px;height:29px;background:#6e3638"></div>
<div class="a" style="left:240px;top:456px;width:18px;height:29px;background:#6e3638"></div>
<div class="a" style="left:259px;top:456px;width:18px;height:29px;background:#6e3638"></div>
<div class="a" style="left:278px;top:456px;width:19px;height:29px;background:#6e3638"></div>
<div class="a" style="left:85px;top:459px;width:25px;height:25px;background:#2a2a2a"></div>
<div class="a" style="left:86px;top:460px;width:23px;height:23px;background-color:#b08080;background-image:repeating-conic-gradient(#a37373 0 25%,#b08080 0 50%);background-size:8px 8px"></div>
<svg style="left:114px;top:457px" width="11" height="11" viewBox="0 0 11 11"><path d="M3 1.5 L10.5 1.5 L10.5 8.5 L8.2 10.8 L3.5 10.8 L3.5 8" fill="none" stroke="#b48c8c" stroke-width="1.3"/><path d="M10.5 8.5 L8.2 8.5 L8.2 10.8 Z" fill="#b48c8c"/><path d="M1.5 3.5 L6.8 7.6" stroke="#b48c8c" stroke-width="1.4" stroke-linecap="round"/></svg>
<svg style="left:114px;top:473px" width="12" height="9" viewBox="0 0 12 9"><rect x="0.9" y="1.4" width="10.2" height="6.8" fill="none" stroke="#b48c8c" stroke-width="1.7"/><path d="M5.3 3.2 L7.8 4.8 L5.3 6.4Z" fill="#b48c8c"/></svg>
<div class="t" style="left:128px;top:466px;color:#c4a8a8;font-size:11px;letter-spacing:0.8px">Shadow</div>
<svg style="left:225px;top:465px" width="9" height="12" viewBox="0 0 9 12"><path d="M4.5 0.5 A4 4 0 0 1 8.5 4.8 C8.5 6.5 7 7.5 6.5 9 L2.5 9 C2 7.5 0.5 6.5 0.5 4.8 A4 4 0 0 1 4.5 0.5Z" fill="#9a6a6c"/><rect x="2.5" y="9.6" width="4" height="2.4" rx="1" fill="#9a6a6c"/></svg>
<svg style="left:243px;top:463px" width="13" height="14" viewBox="0 0 13 14"><rect x="0" y="6" width="12" height="8" fill="#9a6a6c"/><path d="M6.5 0.9 Q11 1.5 11.2 6" fill="none" stroke="#9a6a6c" stroke-width="1.7"/></svg>
<svg style="left:260px;top:464px" width="15" height="13" viewBox="0 0 15 13"><path d="M9.8 4.5 C9 2 7.5 1.2 5.8 1.2 C3 1.2 1 4.5 1 7.5 C1 9.5 2.2 10.8 4 10.8 C6.8 10.8 8.8 7.5 10.2 4.8 M13.2 1.5 C11.8 3.8 10.3 6.5 10 8.3 C9.8 9.8 10.8 10.8 12.8 10.9" fill="none" stroke="#9a6a6c" stroke-width="1.9"/></svg>
<svg style="left:279px;top:463px" width="15" height="15" viewBox="0 0 15 15"><rect x="0" y="0" width="5" height="5" fill="#7e4c4e"/><rect x="5" y="0" width="5" height="5" fill="#9a6a6c"/><rect x="10" y="0" width="5" height="5" fill="#7e4c4e"/><rect x="0" y="5" width="5" height="5" fill="#9a6a6c"/><rect x="5" y="5" width="5" height="5" fill="#7e4c4e"/><rect x="10" y="5" width="5" height="5" fill="#9a6a6c"/><rect x="0" y="10" width="5" height="5" fill="#7e4c4e"/><rect x="5" y="10" width="5" height="5" fill="#9a6a6c"/><rect x="10" y="10" width="5" height="5" fill="#7e4c4e"/></svg>
<div class="a" style="left:0px;top:515px;width:298px;height:1px;background:#3d3d3d"></div>
<div class="a" style="left:23px;top:486px;width:1px;height:29px;background:#3c3c3c"></div>
<svg style="left:0px;top:490px" width="22" height="22" viewBox="0 0 22 22"><path d="M4.3 10.5 A6.8 5.5 0 0 1 17.7 10.5" fill="none" stroke="#5e5e5e" stroke-width="1"/><path d="M4.6 12 A6.9 6 0 0 0 17.4 12" fill="none" stroke="#5e5e5e" stroke-width="1.1"/></svg>
<div class="a" style="left:29px;top:490px;width:16px;height:23px;background-color:#777;background-image:repeating-conic-gradient(#6e6e6e 0 25%,#7a7a7a 0 50%);background-size:8px 8px"></div>
<div class="a" style="left:35px;top:494px;width:3px;height:2px;background:#c04040"></div>
<div class="a" style="left:34px;top:496px;width:4px;height:2px;background:#4060b0"></div>
<div class="a" style="left:35px;top:505px;width:4px;height:1px;background:#4070c0"></div>
<svg style="left:55px;top:488px" width="11" height="11" viewBox="0 0 11 11"><path d="M0.6 1.2 L5 1.2 L6.5 2.6 L10.4 2.6 L10.4 10.4 L0.6 10.4 Z" fill="none" stroke="#8a8a8a" stroke-width="1.1"/><path d="M0.6 1.2 L4 0.6 L5.5 2.6 L0.6 3.6Z" fill="#8a8a8a"/><path d="M0.6 3.5 L10.4 3.5" stroke="#8a8a8a" stroke-width="1"/></svg>
<svg style="left:54px;top:505px" width="11" height="6" viewBox="0 0 11 6"><path d="M0.7 0.7 L5.5 5.3 L10.3 0.7" fill="none" stroke="#d6d6d6" stroke-width="1.4"/></svg>
<div class="t" style="left:68px;top:495px;color:#a6a6a6">Key's drafts</div>
<svg style="left:243px;top:493px" width="13" height="14" viewBox="0 0 13 14"><rect x="0" y="6" width="12" height="8" fill="#747474"/><path d="M6.5 0.9 Q11 1.5 11.2 6" fill="none" stroke="#747474" stroke-width="1.7"/></svg>
<svg style="left:260px;top:494px" width="15" height="13" viewBox="0 0 15 13"><path d="M9.8 4.5 C9 2 7.5 1.2 5.8 1.2 C3 1.2 1 4.5 1 7.5 C1 9.5 2.2 10.8 4 10.8 C6.8 10.8 8.8 7.5 10.2 4.8 M13.2 1.5 C11.8 3.8 10.3 6.5 10 8.3 C9.8 9.8 10.8 10.8 12.8 10.9" fill="none" stroke="#747474" stroke-width="1.9"/></svg>
<svg style="left:280px;top:495px" width="15" height="11" viewBox="0 0 15 11"><rect x="0" y="0" width="7" height="3" fill="#6e6e6e"/><rect x="8" y="0" width="7" height="3" fill="#6e6e6e"/><rect x="0" y="4" width="2.5" height="3" fill="#6e6e6e"/><rect x="3.5" y="4" width="7.5" height="3" fill="#6e6e6e"/><rect x="12" y="4" width="3" height="3" fill="#6e6e6e"/><rect x="0" y="8" width="7" height="3" fill="#6e6e6e"/><rect x="8" y="8" width="7" height="3" fill="#6e6e6e"/></svg>
<div class="a" style="left:0px;top:545px;width:298px;height:1px;background:#3d3d3d"></div>
<div class="a" style="left:23px;top:516px;width:1px;height:29px;background:#3c3c3c"></div>
<svg style="left:0px;top:520px" width="22" height="22" viewBox="0 0 22 22"><path d="M4.3 10.6 A6.8 6.6 0 0 1 17.7 10.6" fill="none" stroke="#d4d4d4" stroke-width="1.5"/><circle cx="11" cy="8.8" r="3.2" fill="#d4d4d4"/><path d="M4.8 12.3 A6.9 6.9 0 0 0 17.2 12.3" fill="none" stroke="#d4d4d4" stroke-width="1.15"/></svg>
<div class="a" style="left:53px;top:516px;width:1px;height:29px;background:#3c3c3c"></div>
<div class="a" style="left:35px;top:527px;width:1px;height:8px;background:#555"></div>
<div class="a" style="left:35px;top:534px;width:9px;height:1px;background:#555"></div>
<div class="a" style="left:60px;top:520px;width:15px;height:17px;background-color:#777;background-image:repeating-conic-gradient(#6e6e6e 0 25%,#7a7a7a 0 50%);background-size:8px 8px"></div>
<div class="a" style="left:66px;top:524px;width:3px;height:2px;background:#c04040"></div>
<div class="a" style="left:64px;top:527px;width:5px;height:2px;background:#4060b0"></div>
<svg style="left:85px;top:518px" width="11" height="11" viewBox="0 0 11 11"><path d="M0.6 1.2 L5 1.2 L6.5 2.6 L10.4 2.6 L10.4 10.4 L0.6 10.4 Z" fill="none" stroke="#d6d6d6" stroke-width="1.1"/><path d="M0.6 1.2 L4 0.6 L5.5 2.6 L0.6 3.6Z" fill="#d6d6d6"/><path d="M0.6 3.5 L10.4 3.5" stroke="#d6d6d6" stroke-width="1"/></svg>
<svg style="left:84px;top:535px" width="11" height="6" viewBox="0 0 11 6"><path d="M0.7 0.7 L5.5 5.3 L10.3 0.7" fill="none" stroke="#d6d6d6" stroke-width="1.4"/></svg>
<svg style="left:98px;top:527px" width="9" height="8" viewBox="0 0 9 8"><path d="M0.5 7.5 L4.5 0.5 L8.5 7.5 M2 5 L7 5" fill="none" stroke="#d6d6d6" stroke-width="1"/></svg>
<svg style="left:243px;top:523px" width="13" height="14" viewBox="0 0 13 14"><rect x="0" y="6" width="12" height="8" fill="#747474"/><path d="M6.5 0.9 Q11 1.5 11.2 6" fill="none" stroke="#747474" stroke-width="1.7"/></svg>
<svg style="left:260px;top:524px" width="15" height="13" viewBox="0 0 15 13"><path d="M9.8 4.5 C9 2 7.5 1.2 5.8 1.2 C3 1.2 1 4.5 1 7.5 C1 9.5 2.2 10.8 4 10.8 C6.8 10.8 8.8 7.5 10.2 4.8 M13.2 1.5 C11.8 3.8 10.3 6.5 10 8.3 C9.8 9.8 10.8 10.8 12.8 10.9" fill="none" stroke="#747474" stroke-width="1.9"/></svg>
<svg style="left:280px;top:525px" width="15" height="11" viewBox="0 0 15 11"><rect x="0" y="0" width="7" height="3" fill="#6e6e6e"/><rect x="8" y="0" width="7" height="3" fill="#6e6e6e"/><rect x="0" y="4" width="2.5" height="3" fill="#6e6e6e"/><rect x="3.5" y="4" width="7.5" height="3" fill="#6e6e6e"/><rect x="12" y="4" width="3" height="3" fill="#6e6e6e"/><rect x="0" y="8" width="7" height="3" fill="#6e6e6e"/><rect x="8" y="8" width="7" height="3" fill="#6e6e6e"/></svg>
</div>
<svg style="left:7px;top:763px" width="18" height="18" viewBox="0 0 18 18"><path d="M9 0.5 L9 17.5 M0.5 9 L17.5 9" stroke="#dadada" stroke-width="1.8"/></svg>
<svg style="left:33px;top:769px" width="8" height="4" viewBox="0 0 8 4"><path d="M0 0 L8 0 L4 4Z" fill="#8a8a8a"/></svg>
<svg style="left:50px;top:762px" width="20" height="20" viewBox="0 0 20 20"><path d="M1 5 L1 19 L16 19" fill="none" stroke="#d8d8d8" stroke-width="1.6"/><rect x="5" y="0.8" width="14.2" height="14.2" fill="none" stroke="#d8d8d8" stroke-width="1.6"/></svg>
<svg style="left:82px;top:766px" width="20" height="12" viewBox="0 0 20 12"><path d="M1 1 L10 10 L19 1" fill="none" stroke="#d8d8d8" stroke-width="1.8"/></svg>
<svg style="left:114px;top:766px" width="20" height="12" viewBox="0 0 20 12"><path d="M1 11 L10 2 L19 11" fill="none" stroke="#d8d8d8" stroke-width="1.8"/></svg>
<svg style="left:146px;top:764px" width="20" height="16" viewBox="0 0 20 16"><path d="M0 2.5 L20 2.5 M0 8 L20 8 M0 13.5 L20 13.5" stroke="#d8d8d8" stroke-width="1.8"/><rect x="13" y="0" width="3" height="5" rx="1.5" fill="#d8d8d8"/><rect x="4" y="5.5" width="3" height="5" rx="1.5" fill="#d8d8d8"/><rect x="9" y="11" width="3" height="5" rx="1.5" fill="#d8d8d8"/></svg>
<svg style="left:290px;top:762px" width="18" height="20" viewBox="0 0 18 20"><rect x="0.5" y="3" width="17" height="2" fill="#d8d8d8"/><rect x="6" y="0.5" width="6" height="3" fill="none" stroke="#d8d8d8" stroke-width="1.2"/><path d="M2 6 L16 6 L15 19.5 L3 19.5 Z" fill="#d8d8d8"/></svg>
<!--LAYERS_END-->

<!--REST_START-->
<div class="a" style="left:1559px;top:10px;width:10px;height:1px;background:#111"></div>
<svg style="left:1604px;top:5px" width="11" height="11" viewBox="0 0 11 11"><rect x="0.5" y="2.5" width="8" height="8" fill="none" stroke="#111"/><path d="M2.5 2.5 L2.5 0.5 L10.5 0.5 L10.5 8.5 L8.5 8.5" fill="none" stroke="#111"/></svg>
<svg style="left:1650px;top:5px" width="11" height="11" viewBox="0 0 11 11"><path d="M0.5 0.5 L10.5 10.5 M10.5 0.5 L0.5 10.5" stroke="#111" stroke-width="1.1"/></svg>
<div class="a" style="left:1405px;top:139px;width:275px;height:1px;background:#3c3c3c"></div>
<div class="a" style="left:1412px;top:116px;width:123px;height:24px;background:#474747;border:1px solid #353535;border-bottom:none;border-radius:4px 4px 0 0;box-shadow:inset 1px 1px 0 #5a5a5a,inset -1px 0 0 #5a5a5a"></div>
<div class="t" style="left:1425px;top:123px;color:#d4d4d4;font-size:11.3px">Selector de color ...</div>
<div class="a" style="left:1536px;top:118px;width:143px;height:22px;background:#404040;border:1px solid #353535;border-bottom:none;border-radius:4px 4px 0 0;box-shadow:inset 1px 1px 0 #555,inset -1px 0 0 #555"></div>
<div class="t" style="left:1548px;top:124px;color:#d4d4d4;font-size:11.5px">Valores predefinidos ...</div>
<svg style="left:1413px;top:140px" width="16" height="16" viewBox="0 0 16 16"><circle cx="8" cy="8" r="7.2" fill="none" stroke="#d0d0d0" stroke-width="1.1"/><path d="M5 7.5 L5 5.5 A3 3 0 0 1 11 5.5" fill="none" stroke="#d0d0d0" stroke-width="1.3"/><rect x="3.8" y="7.5" width="8.4" height="4.5" fill="#d0d0d0"/></svg>
<div class="t" style="left:1435px;top:142px;color:#d4d4d4;font-size:11.65px">Selector de color pequeño</div>
<svg style="left:1641px;top:141px" width="15" height="14" viewBox="0 0 15 14"><rect x="4.5" y="0.5" width="9" height="7" fill="none" stroke="#d8d8d8" stroke-width="1.2"/><rect x="0.5" y="5.5" width="8" height="7.5" fill="#474747" stroke="#d8d8d8" stroke-width="1.2"/></svg>
<svg style="left:1665px;top:143px" width="11" height="11" viewBox="0 0 11 11"><path d="M0.5 0.5 L10.5 10.5 M10.5 0.5 L0.5 10.5" stroke="#d8d8d8" stroke-width="1.4"/></svg>
<div class="a" style="left:1421px;top:166px;width:249px;height:32px;background:linear-gradient(90deg,#f00 0%,#ff0 16.67%,#0f0 33.33%,#0ff 50%,#00f 66.67%,#f0f 83.33%,#f00 100%)"></div>
<div class="a" style="left:1504px;top:166px;width:2px;height:32px;background:#f4f4f4"></div>
<div class="a" style="left:1421px;top:204px;width:249px;height:574px;background:linear-gradient(to top,#000,rgba(0,0,0,0)),linear-gradient(to right,#fff,#00ff00)"></div>
<svg style="left:1641px;top:198px" width="12" height="12" viewBox="0 0 12 12"><path d="M1.5 6 A4.5 4.5 0 0 0 10.5 6" fill="none" stroke="#222" stroke-width="2.5"/><path d="M1.5 6 A4.5 4.5 0 0 0 10.5 6" fill="none" stroke="#eee" stroke-width="1.2"/></svg>
<div class="a" style="left:1407px;top:445px;width:3px;height:16px;background-image:radial-gradient(circle,#8a8a8a 0.6px,transparent 0.9px);background-size:3px 2.6px"></div>
<div class="a" style="left:317px;top:445px;width:3px;height:16px;background-image:radial-gradient(circle,#8a8a8a 0.6px,transparent 0.9px);background-size:3px 2.6px"></div>
<div class="t" style="left:9px;top:805px;color:#d4d4d4;font-size:11.5px">Línea de tiempo de la animación</div>
<svg style="left:216px;top:800px" width="16" height="19" viewBox="0 0 16 19"><rect x="0.5" y="4" width="2.5" height="12" fill="#d6d6d6"/><path d="M4 9.8 L12.5 0.5 L12.5 18.5 Z" fill="#d6d6d6"/><rect x="13" y="0.5" width="2.5" height="18" fill="#d6d6d6"/></svg>
<svg style="left:252px;top:800px" width="14" height="19" viewBox="0 0 14 19"><path d="M0.5 9.5 L9.5 0.5 L9.5 18.5 Z" fill="#d6d6d6"/><rect x="10.3" y="0.5" width="2.5" height="18" fill="#d6d6d6"/></svg>
<div class="a" style="left:286px;top:804px;width:12px;height:12px;background:#d6d6d6"></div>
<svg style="left:322px;top:800px" width="9" height="19" viewBox="0 0 9 19"><path d="M0.5 0.5 L8.5 9.5 L0.5 18.5 Z" fill="#d6d6d6"/></svg>
<svg style="left:354px;top:800px" width="13" height="19" viewBox="0 0 13 19"><rect x="0.5" y="0.5" width="2.5" height="18" fill="#d6d6d6"/><path d="M3.5 0.5 L12.5 9.5 L3.5 18.5 Z" fill="#d6d6d6"/></svg>
<svg style="left:386px;top:800px" width="16" height="19" viewBox="0 0 16 19"><rect x="0.5" y="0.5" width="2.5" height="18" fill="#d6d6d6"/><path d="M3.5 0.5 L12 9.5 L3.5 18.5 Z" fill="#d6d6d6"/><rect x="12.8" y="4" width="2.5" height="12" fill="#d6d6d6"/></svg>
<div class="a" style="left:427px;top:800px;width:67px;height:19px;background:#3a3a3a;border:1px solid #363636;border-radius:3px"></div>
<div class="t" style="left:456px;top:804px;color:#d4d4d4">#&nbsp; 1</div>
<div class="a" style="left:481px;top:800px;width:13px;height:19px;border-left:1px solid #333"></div>
<svg style="left:483px;top:802px" width="9" height="15" viewBox="0 0 9 15"><path d="M0.5 4.5 L4.5 0.5 L8.5 4.5Z" fill="#7a7a7a"/><path d="M0.5 10 L4.5 14 L8.5 10Z" fill="#7a7a7a"/></svg>
<div class="a" style="left:512px;top:795px;width:29px;height:28px;background:#3c3c3c;border:1px solid #2e2e2e;border-radius:3px"></div>
<svg style="left:517px;top:800px" width="20" height="18" viewBox="0 0 20 18"><rect x="0.8" y="3" width="18" height="12" fill="none" stroke="#d6d6d6" stroke-width="1.3" stroke-dasharray="2 1"/><path d="M8 6 L12 9 L8 12 Z" fill="#d6d6d6"/><path d="M14 0.5 L11 3 M8 15 L5 17.5" stroke="#d6d6d6" stroke-width="1.3"/></svg>
<div class="a" style="left:542px;top:800px;width:115px;height:19px;background:#3a3a3a;border:1px solid #363636;border-radius:3px"></div>
<div class="a" style="left:543px;top:801px;width:42px;height:17px;background:#53718f"></div>
<div class="t" style="left:549px;top:804px;color:#dcdcdc;font-size:11.1px">Velocidad: 100 %</div>
<div class="a" style="left:644px;top:800px;width:13px;height:19px;border-left:1px solid #333"></div>
<svg style="left:646px;top:802px" width="9" height="15" viewBox="0 0 9 15"><path d="M0.5 4.5 L4.5 0.5 L8.5 4.5Z" fill="#7a7a7a"/><path d="M0.5 10 L4.5 14 L8.5 10Z" fill="#7a7a7a"/></svg>
<svg style="left:680px;top:801px" width="19" height="16" viewBox="0 0 19 16"><rect x="0.7" y="0.7" width="17.6" height="13.6" fill="none" stroke="#d4d4d4" stroke-width="1.3"/><path d="M3 1 L3 14 M16 1 L16 14" stroke="#d4d4d4" stroke-width="1.2" stroke-dasharray="1.2 1.2"/></svg>
<svg style="left:709px;top:800px" width="21" height="18" viewBox="0 0 21 18"><rect x="4.7" y="0.7" width="15.6" height="11" fill="none" stroke="#d4d4d4" stroke-width="1.2"/><rect x="0.7" y="5.2" width="15.6" height="11.5" fill="#474747" stroke="#d4d4d4" stroke-width="1.2"/><path d="M3 5.5 L3 16.5 M14 5.5 L14 16.5" stroke="#d4d4d4" stroke-width="1" stroke-dasharray="1.2 1.2"/></svg>
<svg style="left:739px;top:800px" width="20" height="18" viewBox="0 0 20 18"><rect x="0.7" y="0.7" width="17.6" height="13.6" fill="none" stroke="#d4d4d4" stroke-width="1.3"/><path d="M3 1 L3 14 M16 1 L16 14" stroke="#d4d4d4" stroke-width="1.2" stroke-dasharray="1.2 1.2"/><path d="M2 17 L17 0.5" stroke="#d4d4d4" stroke-width="1.3"/></svg>
<svg style="left:1525px;top:800px" width="21" height="20" viewBox="0 0 21 20"><path d="M12 0.5 C6 5,0.5 10,1.2 14.5 C1.6 17.5,4 19.3,6 19.5 C3.8 15,6 8,12 0.5Z" fill="#d4d4d4"/><path d="M12 0.5 C8.5 6,6.8 13,9.2 19.5 L11.6 19.5 C10 13,10.5 6,12 0.5Z" fill="#d4d4d4"/><path d="M12 0.5 C12.5 6,13 13,12.8 19.5 C16 19.3,19.8 17,19.8 13.5 C19.8 9,16.5 4.5,12 0.5Z" fill="#d4d4d4"/></svg>
<svg style="left:1559px;top:801px" width="24" height="19" viewBox="0 0 24 19"><rect x="0" y="0" width="19" height="2.6" fill="#d8d8d8"/><rect x="0" y="5.8" width="19" height="2.6" fill="#d8d8d8"/><rect x="0" y="11.6" width="19" height="2.6" fill="#d8d8d8"/><path d="M17 15.5 L23 15.5 L20 18.5Z" fill="#a0a0a0"/></svg>
<svg style="left:1622px;top:803px" width="16" height="14" viewBox="0 0 16 14"><rect x="4.5" y="0.5" width="10" height="8" fill="none" stroke="#d8d8d8" stroke-width="1.2"/><rect x="0.5" y="5" width="9" height="8.5" fill="#474747" stroke="#d8d8d8" stroke-width="1.2"/></svg>
<svg style="left:1651px;top:805px" width="11" height="11" viewBox="0 0 11 11"><path d="M0.5 0.5 L10.5 10.5 M10.5 0.5 L0.5 10.5" stroke="#d8d8d8" stroke-width="1.4"/></svg>
<div class="a" style="left:0px;top:826px;width:1680px;height:149px;background:#383838"></div>
<div class="a" style="left:0px;top:826px;width:202px;height:1px;background:#545454"></div>
<svg style="left:7px;top:833px" width="10" height="10" viewBox="0 0 10 10"><path d="M4.5 0 L4.5 9.5 M0 4.5 L9 4.5" stroke="#d4d4d4" stroke-width="1.3"/><path d="M5 7 L9 7 L7 9Z" fill="#8a8a8a"/></svg>
<svg style="left:25px;top:832px" width="12" height="11" viewBox="0 0 12 11"><path d="M0.5 3.5 L3 3.5 L7 0.5 L7 10.5 L3 7.5 L0.5 7.5Z" fill="#c8c8c8"/><path d="M6.5 8 L11 8 L8.7 10.5Z" fill="#8a8a8a"/></svg>
<svg style="left:186px;top:832px" width="12" height="11" viewBox="0 0 12 11"><rect x="0.5" y="0.5" width="11" height="10" rx="1" fill="none" stroke="#8a8a8a" stroke-dasharray="2 1"/><path d="M2 5.5 L10 5.5 M2 5.5 L4 3.5 M2 5.5 L4 7.5 M10 5.5 L8 3.5 M10 5.5 L8 7.5" stroke="#dcdcdc" stroke-width="1.2"/></svg>
<div class="a" style="left:0px;top:846px;width:202px;height:2px;background:#53718f"></div>
<div class="a" style="left:0px;top:866px;width:202px;height:2px;background:#53718f"></div>
<div class="a" style="left:202px;top:846px;width:1478px;height:23px;background:#373b3e"></div>
<svg style="left:6px;top:853px" width="11" height="11" viewBox="0 0 11 11"><path d="M6 0.5 L10.5 5 L8.5 5.5 L6.5 7.5 L7 9.5 L5.5 9.5 L1.5 5.5 L1.5 4 L3.5 4.5 L5.5 2.5 L6 0.5Z" fill="#c8c8c8"/><path d="M0.5 10.5 L3.5 7.5" stroke="#c8c8c8" stroke-width="1"/></svg>
<div class="t" style="left:22px;top:853px;color:#d8d8d8;font-size:11.5px">Capa de pintu...</div>
<svg style="left:113px;top:851px" width="15" height="14" viewBox="0 0 15 14"><path d="M1 7 A6.6 6.6 0 0 1 14 7" fill="none" stroke="#d4d4d4" stroke-width="1.2"/><circle cx="7.5" cy="5.6" r="3" fill="#d4d4d4"/><path d="M1.2 8.8 A6.7 6.7 0 0 0 13.8 8.8" fill="none" stroke="#d4d4d4" stroke-width="1.1"/></svg>
<svg style="left:133px;top:851px" width="13" height="14" viewBox="0 0 13 14"><rect x="0" y="6" width="12" height="8" fill="#747474"/><path d="M6.5 0.9 Q11 1.5 11.2 6" fill="none" stroke="#747474" stroke-width="1.7"/></svg>
<svg style="left:149px;top:852px" width="15" height="13" viewBox="0 0 15 13"><path d="M9.8 4.5 C9 2 7.5 1.2 5.8 1.2 C3 1.2 1 4.5 1 7.5 C1 9.5 2.2 10.8 4 10.8 C6.8 10.8 8.8 7.5 10.2 4.8 M13.2 1.5 C11.8 3.8 10.3 6.5 10 8.3 C9.8 9.8 10.8 10.8 12.8 10.9" fill="none" stroke="#747474" stroke-width="1.9"/></svg>
<svg style="left:167px;top:851px" width="15" height="15" viewBox="0 0 15 15"><rect x="0" y="0" width="5" height="5" fill="#525252"/><rect x="5" y="0" width="5" height="5" fill="#6a6a6a"/><rect x="10" y="0" width="5" height="5" fill="#525252"/><rect x="0" y="5" width="5" height="5" fill="#6a6a6a"/><rect x="5" y="5" width="5" height="5" fill="#525252"/><rect x="10" y="5" width="5" height="5" fill="#6a6a6a"/><rect x="0" y="10" width="5" height="5" fill="#525252"/><rect x="5" y="10" width="5" height="5" fill="#6a6a6a"/><rect x="10" y="10" width="5" height="5" fill="#525252"/></svg>
<svg style="left:188px;top:853px" width="9" height="12" viewBox="0 0 9 12"><path d="M4.5 0.5 A4 4 0 0 1 8.5 4.8 C8.5 6.5 7 7.5 6.5 9 L2.5 9 C2 7.5 0.5 6.5 0.5 4.8 A4 4 0 0 1 4.5 0.5Z" fill="#6a6a6a"/><rect x="2.5" y="9.6" width="4" height="2.4" rx="1" fill="#6a6a6a"/></svg>
<div class="a" style="left:0px;top:868px;width:202px;height:107px;background:#474747"></div>
<div class="a" style="left:202px;top:826px;width:1478px;height:20px;background:#383838"></div>
<div class="a" style="left:357px;top:841px;width:1323px;height:4px;background:#333333"></div>
<div class="a" style="left:356px;top:841px;width:1px;height:4px;background:#3a3a3a"></div>
<div class="a" style="left:387px;top:841px;width:1px;height:4px;background:#3a3a3a"></div>
<div class="a" style="left:418px;top:841px;width:1px;height:4px;background:#3a3a3a"></div>
<div class="a" style="left:449px;top:841px;width:1px;height:4px;background:#3a3a3a"></div>
<div class="a" style="left:480px;top:841px;width:1px;height:4px;background:#3a3a3a"></div>
<div class="a" style="left:511px;top:841px;width:1px;height:4px;background:#3a3a3a"></div>
<div class="a" style="left:542px;top:841px;width:1px;height:4px;background:#3a3a3a"></div>
<div class="a" style="left:573px;top:841px;width:1px;height:4px;background:#3a3a3a"></div>
<div class="a" style="left:604px;top:841px;width:1px;height:4px;background:#3a3a3a"></div>
<div class="a" style="left:635px;top:841px;width:1px;height:4px;background:#3a3a3a"></div>
<div class="a" style="left:666px;top:841px;width:1px;height:4px;background:#3a3a3a"></div>
<div class="a" style="left:697px;top:841px;width:1px;height:4px;background:#3a3a3a"></div>
<div class="a" style="left:728px;top:841px;width:1px;height:4px;background:#3a3a3a"></div>
<div class="a" style="left:759px;top:841px;width:1px;height:4px;background:#3a3a3a"></div>
<div class="a" style="left:790px;top:841px;width:1px;height:4px;background:#3a3a3a"></div>
<div class="a" style="left:821px;top:841px;width:1px;height:4px;background:#3a3a3a"></div>
<div class="a" style="left:852px;top:841px;width:1px;height:4px;background:#3a3a3a"></div>
<div class="a" style="left:883px;top:841px;width:1px;height:4px;background:#3a3a3a"></div>
<div class="a" style="left:914px;top:841px;width:1px;height:4px;background:#3a3a3a"></div>
<div class="a" style="left:945px;top:841px;width:1px;height:4px;background:#3a3a3a"></div>
<div class="a" style="left:976px;top:841px;width:1px;height:4px;background:#3a3a3a"></div>
<div class="a" style="left:1007px;top:841px;width:1px;height:4px;background:#3a3a3a"></div>
<div class="a" style="left:1038px;top:841px;width:1px;height:4px;background:#3a3a3a"></div>
<div class="a" style="left:1069px;top:841px;width:1px;height:4px;background:#3a3a3a"></div>
<div class="a" style="left:1100px;top:841px;width:1px;height:4px;background:#3a3a3a"></div>
<div class="a" style="left:1131px;top:841px;width:1px;height:4px;background:#3a3a3a"></div>
<div class="a" style="left:1162px;top:841px;width:1px;height:4px;background:#3a3a3a"></div>
<div class="a" style="left:1193px;top:841px;width:1px;height:4px;background:#3a3a3a"></div>
<div class="a" style="left:1224px;top:841px;width:1px;height:4px;background:#3a3a3a"></div>
<div class="a" style="left:1255px;top:841px;width:1px;height:4px;background:#3a3a3a"></div>
<div class="a" style="left:1286px;top:841px;width:1px;height:4px;background:#3a3a3a"></div>
<div class="a" style="left:1317px;top:841px;width:1px;height:4px;background:#3a3a3a"></div>
<div class="a" style="left:1348px;top:841px;width:1px;height:4px;background:#3a3a3a"></div>
<div class="a" style="left:1379px;top:841px;width:1px;height:4px;background:#3a3a3a"></div>
<div class="a" style="left:1410px;top:841px;width:1px;height:4px;background:#3a3a3a"></div>
<div class="a" style="left:1441px;top:841px;width:1px;height:4px;background:#3a3a3a"></div>
<div class="a" style="left:1472px;top:841px;width:1px;height:4px;background:#3a3a3a"></div>
<div class="a" style="left:1503px;top:841px;width:1px;height:4px;background:#3a3a3a"></div>
<div class="a" style="left:1534px;top:841px;width:1px;height:4px;background:#3a3a3a"></div>
<div class="a" style="left:1565px;top:841px;width:1px;height:4px;background:#3a3a3a"></div>
<div class="a" style="left:1596px;top:841px;width:1px;height:4px;background:#3a3a3a"></div>
<div class="a" style="left:1627px;top:841px;width:1px;height:4px;background:#3a3a3a"></div>
<div class="a" style="left:1658px;top:841px;width:1px;height:4px;background:#3a3a3a"></div>
<div class="a" style="left:202px;top:832px;width:1px;height:9px;background:#444"></div>
<div class="t" style="left:204px;top:828px;color:#d0d0d0;font-size:12px">0</div>
<div class="a" style="left:295px;top:832px;width:1px;height:9px;background:#444"></div>
<div class="t" style="left:297px;top:828px;color:#d0d0d0;font-size:12px">3</div>
<div class="a" style="left:388px;top:832px;width:1px;height:9px;background:#444"></div>
<div class="t" style="left:390px;top:828px;color:#d0d0d0;font-size:12px">6</div>
<div class="a" style="left:481px;top:832px;width:1px;height:9px;background:#444"></div>
<div class="t" style="left:483px;top:828px;color:#d0d0d0;font-size:12px">9</div>
<div class="a" style="left:574px;top:832px;width:1px;height:9px;background:#444"></div>
<div class="t" style="left:575px;top:828px;color:#d0d0d0;font-size:12px">12</div>
<div class="a" style="left:667px;top:832px;width:1px;height:9px;background:#444"></div>
<div class="t" style="left:668px;top:828px;color:#d0d0d0;font-size:12px">15</div>
<div class="a" style="left:760px;top:832px;width:1px;height:9px;background:#444"></div>
<div class="t" style="left:761px;top:828px;color:#d0d0d0;font-size:12px">18</div>
<div class="a" style="left:853px;top:832px;width:1px;height:9px;background:#444"></div>
<div class="t" style="left:854px;top:828px;color:#d0d0d0;font-size:12px">21</div>
<div class="a" style="left:946px;top:832px;width:1px;height:9px;background:#444"></div>
<div class="t" style="left:947px;top:828px;color:#d0d0d0;font-size:12px">24</div>
<div class="a" style="left:1039px;top:832px;width:1px;height:9px;background:#444"></div>
<div class="t" style="left:1040px;top:828px;color:#d0d0d0;font-size:12px">27</div>
<div class="a" style="left:1132px;top:832px;width:1px;height:9px;background:#444"></div>
<div class="t" style="left:1133px;top:828px;color:#d0d0d0;font-size:12px">30</div>
<div class="a" style="left:1225px;top:832px;width:1px;height:9px;background:#444"></div>
<div class="t" style="left:1226px;top:828px;color:#d0d0d0;font-size:12px">33</div>
<div class="a" style="left:1318px;top:832px;width:1px;height:9px;background:#444"></div>
<div class="t" style="left:1319px;top:828px;color:#d0d0d0;font-size:12px">36</div>
<div class="a" style="left:1411px;top:832px;width:1px;height:9px;background:#444"></div>
<div class="t" style="left:1412px;top:828px;color:#d0d0d0;font-size:12px">39</div>
<div class="a" style="left:1504px;top:832px;width:1px;height:9px;background:#444"></div>
<div class="t" style="left:1505px;top:828px;color:#d0d0d0;font-size:12px">42</div>
<div class="a" style="left:1597px;top:832px;width:1px;height:9px;background:#444"></div>
<div class="t" style="left:1598px;top:828px;color:#d0d0d0;font-size:12px">45</div>
<div class="a" style="left:202px;top:841px;width:30px;height:4px;#777;background:#747474"></div>
<div class="a" style="left:233px;top:841px;width:30px;height:4px;background:#ea9a30"></div>
<div class="a" style="left:264px;top:841px;width:30px;height:4px;#777;background:#747474"></div>
<div class="a" style="left:295px;top:841px;width:30px;height:4px;#777;background:#747474"></div>
<div class="a" style="left:326px;top:841px;width:30px;height:4px;#777;background:#747474"></div>
<div class="a" style="left:202px;top:846px;width:30px;height:23px;background:#53718f"></div>
<div class="a" style="left:233px;top:846px;width:30px;height:23px;background:#53718f"></div>
<div class="a" style="left:264px;top:846px;width:30px;height:23px;background:#53718f"></div>
<div class="a" style="left:295px;top:846px;width:30px;height:23px;background:#53718f"></div>
<div class="a" style="left:326px;top:846px;width:30px;height:23px;background:#53718f"></div>
<div class="a" style="left:233px;top:846px;width:31px;height:23px;background:#ea9a30"></div>
<div class="a" style="left:237px;top:846px;width:22px;height:23px;background:repeating-linear-gradient(45deg,#b39a72 0 4px,#8e7a56 4px 7px)"></div>
<div class="a" style="left:246px;top:855px;width:5px;height:5px;background:#ea9a30;border-radius:50%"></div>
<div class="a" style="left:357px;top:857px;width:1323px;height:1px;background:#46596d"></div>
<div class="a" style="left:356px;top:846px;width:1px;height:23px;background:#323437"></div>
<div class="a" style="left:387px;top:846px;width:1px;height:23px;background:#323437"></div>
<div class="a" style="left:418px;top:846px;width:1px;height:23px;background:#323437"></div>
<div class="a" style="left:449px;top:846px;width:1px;height:23px;background:#323437"></div>
<div class="a" style="left:480px;top:846px;width:1px;height:23px;background:#323437"></div>
<div class="a" style="left:511px;top:846px;width:1px;height:23px;background:#323437"></div>
<div class="a" style="left:542px;top:846px;width:1px;height:23px;background:#323437"></div>
<div class="a" style="left:573px;top:846px;width:1px;height:23px;background:#323437"></div>
<div class="a" style="left:604px;top:846px;width:1px;height:23px;background:#323437"></div>
<div class="a" style="left:635px;top:846px;width:1px;height:23px;background:#323437"></div>
<div class="a" style="left:666px;top:846px;width:1px;height:23px;background:#323437"></div>
<div class="a" style="left:697px;top:846px;width:1px;height:23px;background:#323437"></div>
<div class="a" style="left:728px;top:846px;width:1px;height:23px;background:#323437"></div>
<div class="a" style="left:759px;top:846px;width:1px;height:23px;background:#323437"></div>
<div class="a" style="left:790px;top:846px;width:1px;height:23px;background:#323437"></div>
<div class="a" style="left:821px;top:846px;width:1px;height:23px;background:#323437"></div>
<div class="a" style="left:852px;top:846px;width:1px;height:23px;background:#323437"></div>
<div class="a" style="left:883px;top:846px;width:1px;height:23px;background:#323437"></div>
<div class="a" style="left:914px;top:846px;width:1px;height:23px;background:#323437"></div>
<div class="a" style="left:945px;top:846px;width:1px;height:23px;background:#323437"></div>
<div class="a" style="left:976px;top:846px;width:1px;height:23px;background:#323437"></div>
<div class="a" style="left:1007px;top:846px;width:1px;height:23px;background:#323437"></div>
<div class="a" style="left:1038px;top:846px;width:1px;height:23px;background:#323437"></div>
<div class="a" style="left:1069px;top:846px;width:1px;height:23px;background:#323437"></div>
<div class="a" style="left:1100px;top:846px;width:1px;height:23px;background:#323437"></div>
<div class="a" style="left:1131px;top:846px;width:1px;height:23px;background:#323437"></div>
<div class="a" style="left:1162px;top:846px;width:1px;height:23px;background:#323437"></div>
<div class="a" style="left:1193px;top:846px;width:1px;height:23px;background:#323437"></div>
<div class="a" style="left:1224px;top:846px;width:1px;height:23px;background:#323437"></div>
<div class="a" style="left:1255px;top:846px;width:1px;height:23px;background:#323437"></div>
<div class="a" style="left:1286px;top:846px;width:1px;height:23px;background:#323437"></div>
<div class="a" style="left:1317px;top:846px;width:1px;height:23px;background:#323437"></div>
<div class="a" style="left:1348px;top:846px;width:1px;height:23px;background:#323437"></div>
<div class="a" style="left:1379px;top:846px;width:1px;height:23px;background:#323437"></div>
<div class="a" style="left:1410px;top:846px;width:1px;height:23px;background:#323437"></div>
<div class="a" style="left:1441px;top:846px;width:1px;height:23px;background:#323437"></div>
<div class="a" style="left:1472px;top:846px;width:1px;height:23px;background:#323437"></div>
<div class="a" style="left:1503px;top:846px;width:1px;height:23px;background:#323437"></div>
<div class="a" style="left:1534px;top:846px;width:1px;height:23px;background:#323437"></div>
<div class="a" style="left:1565px;top:846px;width:1px;height:23px;background:#323437"></div>
<div class="a" style="left:1596px;top:846px;width:1px;height:23px;background:#323437"></div>
<div class="a" style="left:1627px;top:846px;width:1px;height:23px;background:#323437"></div>
<div class="a" style="left:1658px;top:846px;width:1px;height:23px;background:#323437"></div>
<div class="a" style="left:0px;top:975px;width:1680px;height:14px;background:#3e3e3e;border-top:1px solid #555;border-bottom:1px solid #555"></div>
<svg style="left:4px;top:978px" width="6" height="9" viewBox="0 0 6 9"><path d="M5 0.5 L5 8.5 L0.5 4.5Z" fill="#8a8a8a"/></svg>
<div class="a" style="left:15px;top:976px;width:1378px;height:12px;border:1px solid #555;background:#434343"></div>
<svg style="left:1664px;top:978px" width="6" height="9" viewBox="0 0 6 9"><path d="M0.5 0.5 L0.5 8.5 L5 4.5Z" fill="#8a8a8a"/></svg>
<div class="a" style="left:0px;top:989px;width:1680px;height:31px;background:#474747"></div>
<div class="a" style="left:7px;top:997px;width:15px;height:15px;border:1px solid #c8c8c8"></div>
<svg style="left:9px;top:999px" width="11" height="11" viewBox="0 0 11 11"><circle cx="5.5" cy="5.5" r="4" fill="none" stroke="#d8d8d8" stroke-width="1" stroke-dasharray="1 1"/></svg>
<div class="t" style="left:37px;top:1000px;color:#d4d4d4;font-size:11.6px">Ink brush 25</div>
<div class="t" style="left:369px;top:1000px;color:#d4d4d4;font-size:11.65px">RGB/Alfa (Entero de 8 bits/canal)&nbsp; sRGB-elle-V2-srgbtrc.icc</div>
<div class="a" style="left:1146px;top:995px;width:136px;height:22px;border:1px solid #363636;background:#444"></div>
<div class="a" style="left:1149px;top:998px;width:12px;height:16px;background:#53718f"></div>
<div class="t" style="left:1150px;top:1000px;color:#d8d8d8;font-size:11.1px">1.756 <u>x</u> 1.240 (188,4 MiB)</div>
<svg style="left:1289px;top:994px" width="22" height="22" viewBox="0 0 22 22"><circle cx="11" cy="11" r="10.5" fill="#2e2e2e"/><path d="M5 11 L16 11" stroke="#e0e0e0" stroke-width="1.3"/><circle cx="15.5" cy="11" r="1.3" fill="#e0e0e0"/><circle cx="5.5" cy="11" r="1" fill="#e0e0e0"/></svg>
<div class="t" style="left:1341px;top:1000px;color:#d4d4d4">0,00˚</div>
<div class="t" style="left:1523px;top:1000px;color:#d4d4d4">50,0%</div>
<div class="a" style="left:1573px;top:1004px;width:80px;height:3px;background:#3a3a3a;border-radius:1px"></div>
<div class="a" style="left:1573px;top:1004px;width:18px;height:3px;background:#6f8aa6"></div>
<div class="a" style="left:1588px;top:997px;width:12px;height:16px;background:#5a5a5a;border:1px solid #333;border-radius:3px"></div>
<div class="a" style="left:1655px;top:995px;width:24px;height:22px;border:1px solid #333;background:#3e3e3e;border-radius:2px"></div>
<svg style="left:1660px;top:999px" width="13" height="13" viewBox="0 0 13 13"><rect x="0.7" y="0.7" width="11.6" height="11.6" fill="none" stroke="#d8d8d8" stroke-width="1.3"/><rect x="4" y="4" width="5" height="5" fill="#d8d8d8"/></svg>
<div class="a" style="left:0px;top:1020px;width:1680px;height:30px;background:linear-gradient(90deg,#dfe0e6 0px,#dfe0e6 215px,#e0d7d8 380px,#e0d4d4 620px,#dcdcd0 640px,#dcdcd0 1100px,#ddd1cf 1180px,#ddd0ce 1680px)"></div>
<div class="a" style="left:218px;top:1020px;width:160px;height:30px;background:#f1eff1"></div>
<svg style="left:0;top:1020px" width="1680" height="30" viewBox="0 0 1680 30"><path d="M639.0 0 Q639.3 15 639.3 30" stroke="rgba(190,110,110,0.22)" stroke-width="1" fill="none"/><path d="M646.4 0 Q647.4 15 644.0 30" stroke="rgba(190,110,110,0.22)" stroke-width="1" fill="none"/><path d="M650.1 0 Q652.8 15 649.4 30" stroke="rgba(190,110,110,0.22)" stroke-width="1" fill="none"/><path d="M656.9 0 Q660.9 15 658.2 30" stroke="rgba(190,110,110,0.22)" stroke-width="1" fill="none"/><path d="M665.3 0 Q665.2 15 668.1 30" stroke="rgba(190,110,110,0.22)" stroke-width="1" fill="none"/><path d="M668.6 0 Q669.7 15 673.4 30" stroke="rgba(190,110,110,0.22)" stroke-width="1" fill="none"/><path d="M676.1 0 Q678.0 15 679.1 30" stroke="rgba(190,110,110,0.22)" stroke-width="1" fill="none"/><path d="M680.3 0 Q682.3 15 682.6 30" stroke="rgba(190,110,110,0.22)" stroke-width="1" fill="none"/><path d="M687.2 0 Q683.5 15 692.0 30" stroke="rgba(190,110,110,0.22)" stroke-width="1" fill="none"/><path d="M693.9 0 Q695.6 15 698.8 30" stroke="rgba(190,110,110,0.22)" stroke-width="1" fill="none"/><path d="M700.9 0 Q704.2 15 701.4 30" stroke="rgba(190,110,110,0.22)" stroke-width="1" fill="none"/><path d="M707.2 0 Q706.8 15 712.6 30" stroke="rgba(190,110,110,0.22)" stroke-width="1" fill="none"/><path d="M713.5 0 Q710.3 15 711.7 30" stroke="rgba(190,110,110,0.22)" stroke-width="1" fill="none"/><path d="M716.9 0 Q720.6 15 717.8 30" stroke="rgba(190,110,110,0.22)" stroke-width="1" fill="none"/><path d="M625 0 Q630 15 628 30 M645 2 L680 10 M700 0 L725 30 M733 0 Q728 15 735 30" stroke="rgba(150,150,150,0.3)" stroke-width="1.2" fill="none"/><path d="M1080.5 0 Q1078.9 15 1082.1 30" stroke="rgba(170,170,180,0.25)" stroke-width="1" fill="none"/><path d="M1087.5 0 Q1086.4 15 1089.8 30" stroke="rgba(170,170,180,0.25)" stroke-width="1" fill="none"/><path d="M1096.3 0 Q1099.6 15 1099.5 30" stroke="rgba(170,170,180,0.25)" stroke-width="1" fill="none"/><path d="M1105.7 0 Q1108.6 15 1111.6 30" stroke="rgba(170,170,180,0.25)" stroke-width="1" fill="none"/><path d="M1112.7 0 Q1110.0 15 1117.4 30" stroke="rgba(170,170,180,0.25)" stroke-width="1" fill="none"/><path d="M1121.9 0 Q1125.1 15 1124.0 30" stroke="rgba(170,170,180,0.25)" stroke-width="1" fill="none"/><path d="M1128.9 0 Q1126.5 15 1133.3 30" stroke="rgba(170,170,180,0.25)" stroke-width="1" fill="none"/><path d="M1136.3 0 Q1134.6 15 1133.9 30" stroke="rgba(170,170,180,0.25)" stroke-width="1" fill="none"/><path d="M1145.4 0 Q1149.3 15 1143.2 30" stroke="rgba(170,170,180,0.25)" stroke-width="1" fill="none"/><path d="M1153.2 0 Q1152.5 15 1151.6 30" stroke="rgba(170,170,180,0.25)" stroke-width="1" fill="none"/><path d="M1052 5 Q1070 25 1060 30 M1105 0 L1090 8 L1085 30 M1158 0 Q1162 15 1156 30" stroke="rgba(150,150,160,0.3)" stroke-width="1.2" fill="none"/></svg>
<svg style="left:16px;top:1025px" width="21" height="21" viewBox="0 0 21 21"><rect x="0.7" y="0.7" width="8" height="8" fill="none" stroke="#9a9a9a" stroke-width="1.3"/><rect x="12" y="0.7" width="8" height="8" fill="none" stroke="#9a9a9a" stroke-width="1.3"/><rect x="0.7" y="12" width="8" height="8" fill="none" stroke="#9a9a9a" stroke-width="1.3"/><rect x="12" y="12" width="8" height="8" fill="none" stroke="#9a9a9a" stroke-width="1.3"/></svg>
<div class="a" style="left:61px;top:1047px;width:152px;height:3px;background:#3c3c3c"></div>
<div class="a" style="left:218px;top:1047px;width:160px;height:3px;background:#3c3c3c"></div>
<div class="a" style="left:383px;top:1047px;width:152px;height:3px;background:#3c3c3c"></div>
<div class="a" style="left:626px;top:1047px;width:152px;height:3px;background:#3c3c3c"></div>
<div class="a" style="left:787px;top:1047px;width:153px;height:3px;background:#3c3c3c"></div>
<div class="a" style="left:947px;top:1047px;width:153px;height:3px;background:#3c3c3c"></div>
<svg style="left:67px;top:1027px" width="16" height="16" viewBox="0 0 16 16"><path d="M15.5 9 L4.5 9 C4.8 12,7 13.5,9.5 13.5 C11.5 13.5,13.5 12.5,15 11.5 L15 14.5 C13.5 15.5,11.5 16,9.5 16 C4.5 16,1 12.5,1 8.5 C1 4,4.5 0.5,9 0.5 C13 0.5,15.5 3.5,15.5 7.5 Z M4.8 6.8 L11.8 6.8 C11.6 4.8,10.5 3.5,8.5 3.5 C6.5 3.5,5.2 4.8,4.8 6.8Z" fill="#1d7fe0"/></svg>
<div class="t" style="left:87px;top:1030px;color:#111;font-size:11.5px">Graphics / Krita · GitL...</div>
<div class="a" style="left:229px;top:1029px;width:13px;height:13px;border-radius:50%;background:conic-gradient(#ff10ff 0deg,#ff70a0 70deg,#ffb040 110deg,#f8f020 140deg,#60ff60 170deg,#20ffe0 205deg,#30d0ff 240deg,#6090ff 280deg,#b050ff 320deg,#ff10ff 360deg)"></div>
<svg style="left:228px;top:1029px" width="14" height="14" viewBox="0 0 14 14"><path d="M0.5 0.5 L8.5 7.5" stroke="#2a2a2a" stroke-width="2.2" stroke-linecap="round"/><ellipse cx="10" cy="9" rx="1.8" ry="2.2" transform="rotate(-40 10 9)" fill="#111"/></svg>
<div class="t" style="left:248px;top:1030px;color:#111;font-size:11.8px">japanese animation&nbsp; ...</div>
<svg style="left:389px;top:1027px" width="16" height="16" viewBox="0 0 16 16"><circle cx="8" cy="8" r="7.5" fill="#db4437"/><path d="M8 8 L15.5 8 A7.5 7.5 0 0 1 4.25 14.5Z" fill="#f4c20d"/><path d="M8 8 L4.25 14.5 A7.5 7.5 0 0 1 1.5 4.25 Z" fill="#0f9d58"/><circle cx="8" cy="8" r="3.5" fill="#fff"/><circle cx="8" cy="8" r="2.7" fill="#4285f4"/><circle cx="12" cy="13" r="3" fill="#333"/></svg>
<div class="t" style="left:409px;top:1030px;color:#111;font-size:12px">Introduction to Layer...</div>
<svg style="left:552px;top:1026px" width="15" height="17" viewBox="0 0 15 17"><path d="M4 3.5 A3.5 3.5 0 0 1 11 3.5" fill="none" stroke="#2060b0" stroke-width="1.3"/><rect x="0.5" y="3.5" width="14" height="13" rx="1.5" fill="#1a5fb4"/><rect x="3.5" y="7" width="3.5" height="3.5" fill="#f25022"/><rect x="8" y="7" width="3.5" height="3.5" fill="#7fba00"/><rect x="3.5" y="11.5" width="3.5" height="3.5" fill="#00a4ef"/><rect x="8" y="11.5" width="3.5" height="3.5" fill="#ffb900"/></svg>
<svg style="left:593px;top:1027px" width="16" height="15" viewBox="0 0 16 15"><ellipse cx="8" cy="8" rx="7.5" ry="6.5" fill="#c0d8f0"/><path d="M1 9 C4 5,10 4,15 6 L15 11 C10 13,4 13,1 11Z" fill="#2a3a50"/><circle cx="9" cy="5" r="3" fill="#f0f0f0"/></svg>
<svg style="left:632px;top:1027px" width="17" height="15" viewBox="0 0 17 15"><rect x="0.5" y="0.5" width="16" height="11.5" fill="#2090e0" stroke="#1570c0"/><rect x="3" y="13" width="11" height="1.5" fill="#1570c0"/></svg>
<div class="t" style="left:652px;top:1030px;color:#111;font-size:11.6px">Escritorio</div>
<svg style="left:792px;top:1026px" width="17" height="17" viewBox="0 0 17 17"><circle cx="8.5" cy="8.5" r="8" fill="#fff"/><path d="M4 6 L6 12 L8.5 7 L11 12 L13 6" fill="none" stroke="#3aa0e0" stroke-width="1.6"/></svg>
<div class="t" style="left:813px;top:1030px;color:#111;font-size:11.7px">Wacom Desktop Cen...</div>
<svg style="left:953px;top:1026px" width="17" height="17" viewBox="0 0 17 17"><rect x="6" y="1" width="10.5" height="15" fill="#fff" stroke="#2b579a"/><path d="M9 5 L15 5 M9 8 L15 8 M9 11 L15 11" stroke="#2b579a"/><rect x="0.5" y="3.5" width="10" height="10" fill="#2b579a"/><path d="M2 6 L3.5 11 L5.5 7.5 L7.5 11 L9 6" fill="none" stroke="#fff" stroke-width="1.1"/></svg>
<div class="t" style="left:974px;top:1030px;color:#111;font-size:11.9px">Constancia - Micros...</div>
<svg style="left:1470px;top:1030px" width="15" height="9" viewBox="0 0 15 9"><path d="M0.8 8 L7.5 1.2 L14.2 8" fill="none" stroke="#111" stroke-width="1.3"/></svg>
<svg style="left:1496px;top:1027px" width="17" height="17" viewBox="0 0 17 17"><path d="M13 1 L16 4 L7 13 L4 14 L5 11 Z" fill="none" stroke="#111" stroke-width="1.2"/><path d="M5 11 C2 11,1 13,1 15 C3 16,4 15,4 14" fill="none" stroke="#111" stroke-width="1.2"/><path d="M9 3 L12 6" stroke="#111"/></svg>
<div class="t" style="left:1530px;top:1030px;color:#111;font-size:12px">ESP</div>
<div class="t" style="left:1564px;top:1030px;color:#111;font-size:11.2px">10:27 a. m.</div>
<svg style="left:1639px;top:1027px" width="17" height="17" viewBox="0 0 17 17"><path d="M0.5 0.5 L16.5 0.5 L16.5 12.5 L10 12.5 L7 16 L7 12.5 L0.5 12.5Z" fill="#111"/><path d="M3.5 3.5 L13.5 3.5 M3.5 6.5 L13.5 6.5 M3.5 9.5 L10.5 9.5" stroke="#e0d0cf" stroke-width="1.1"/></svg>
<!--REST_END-->
</body></html>
